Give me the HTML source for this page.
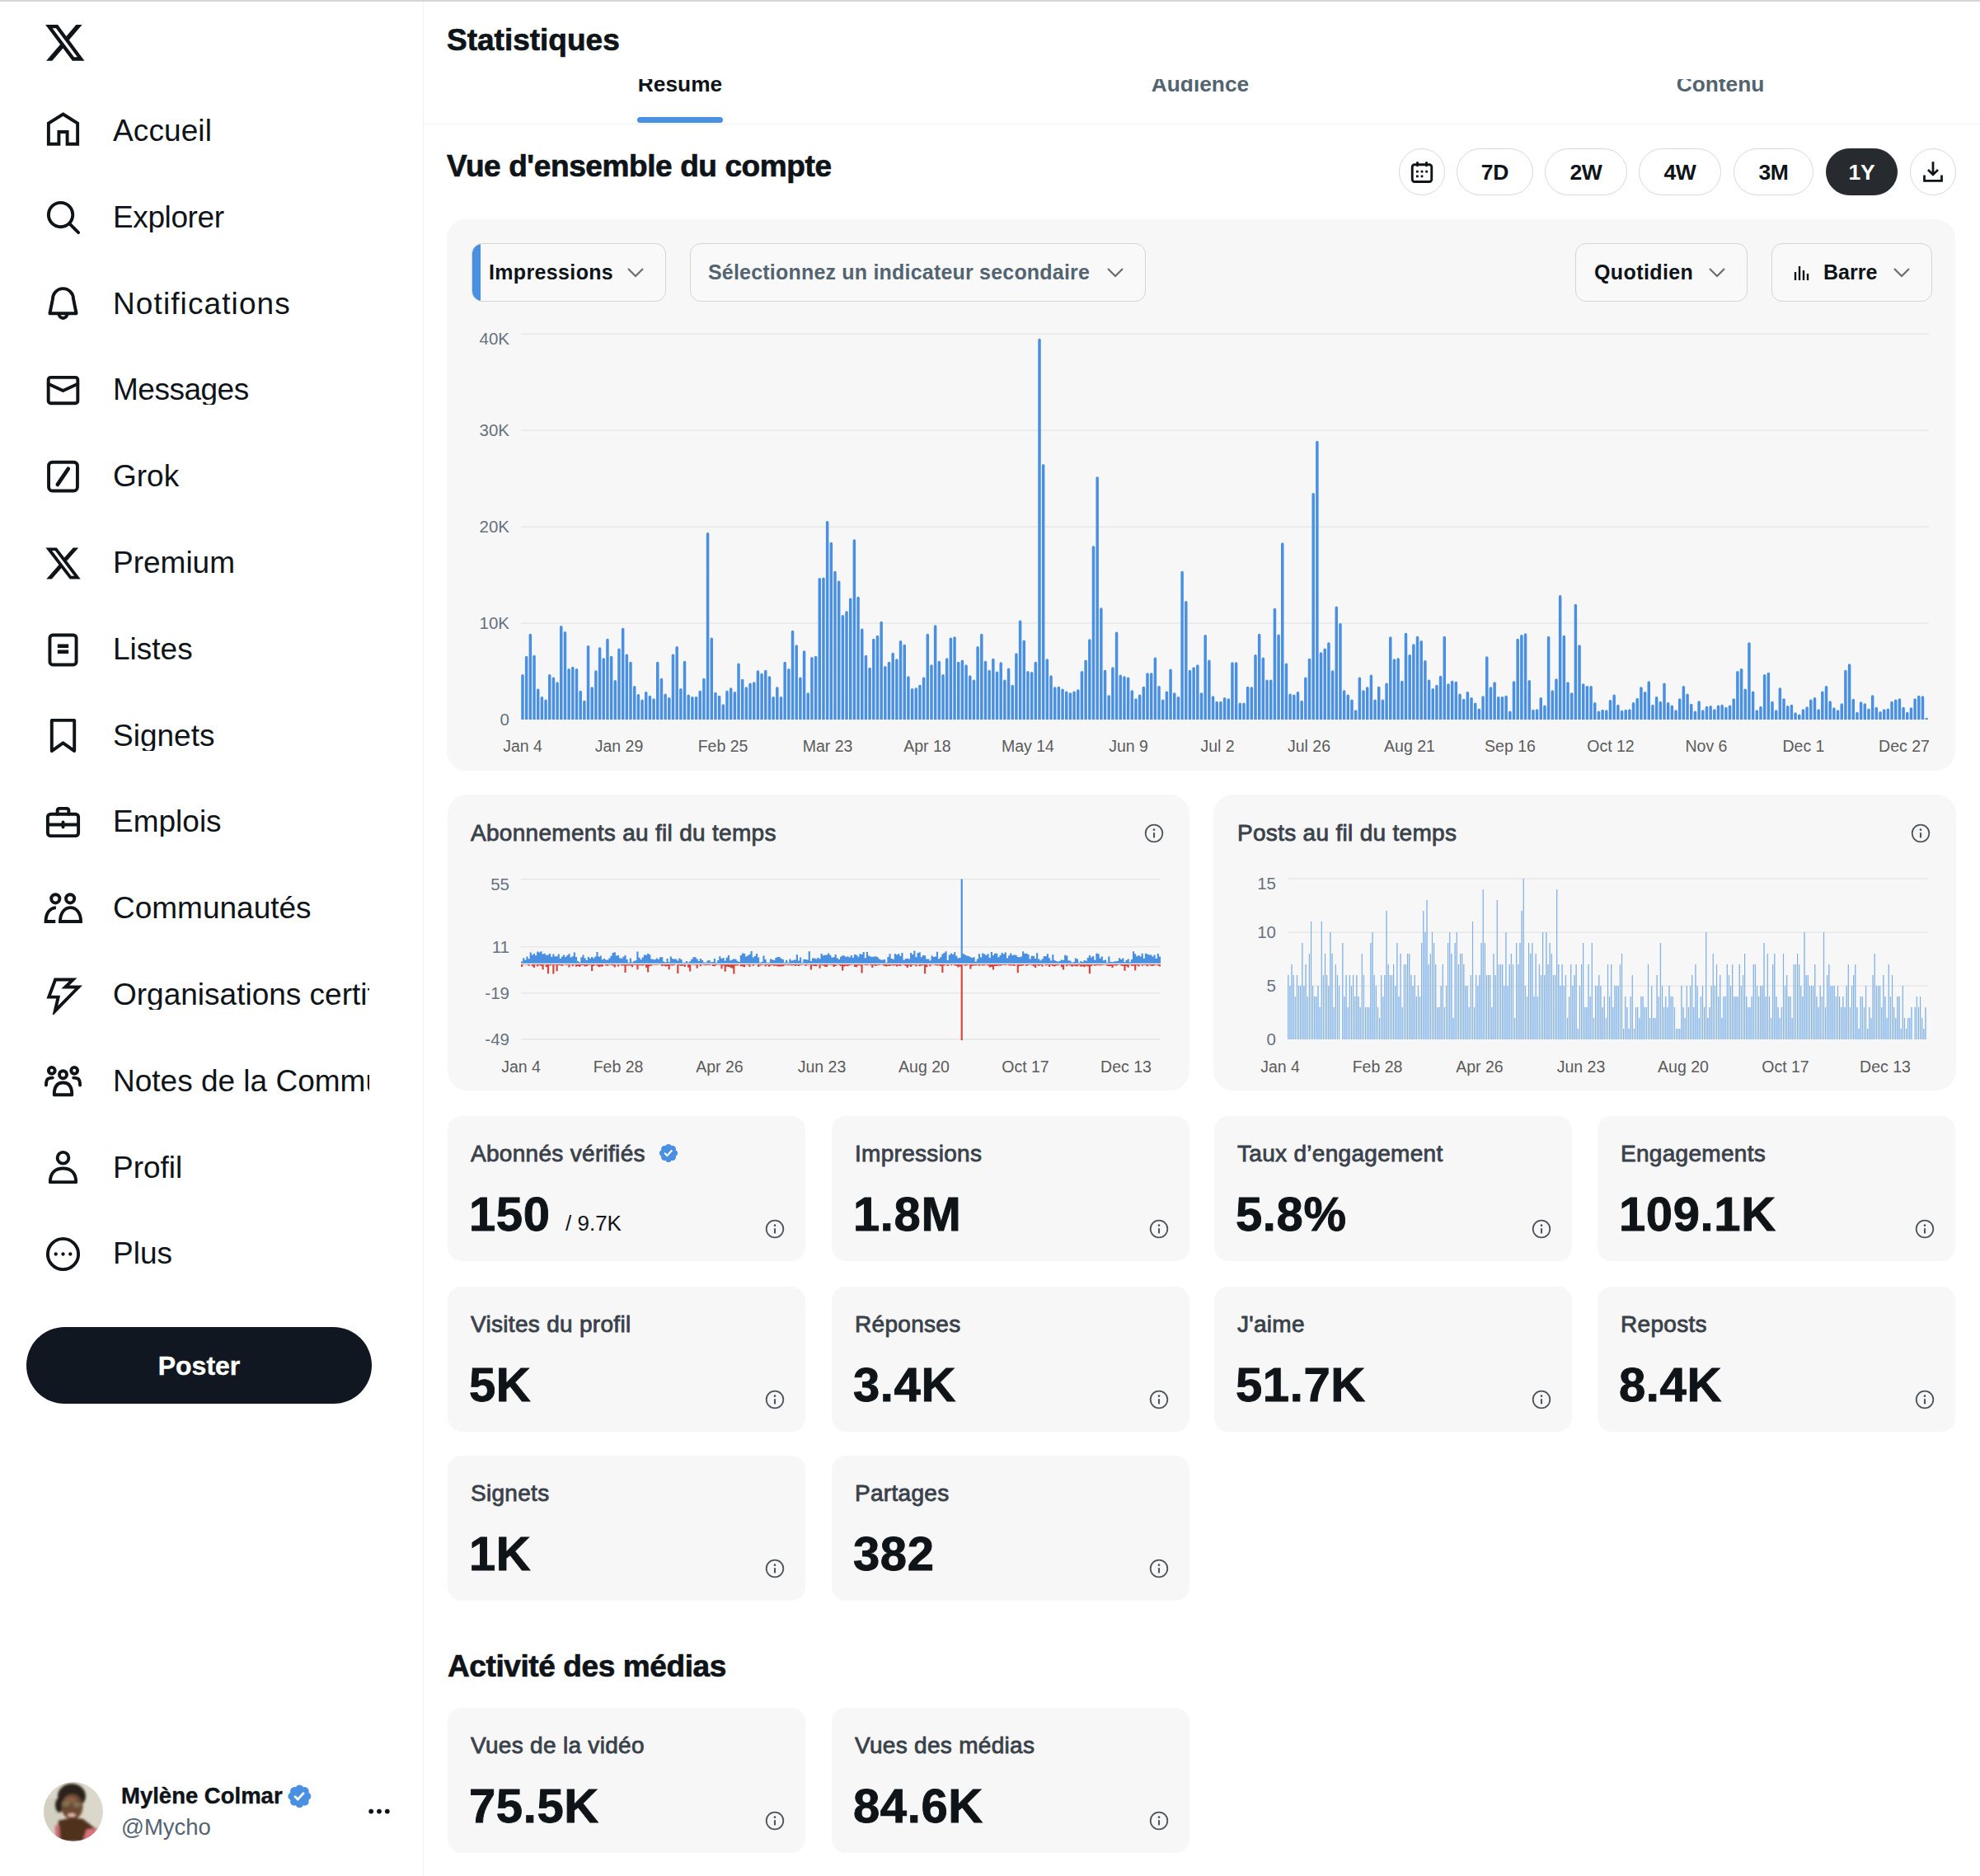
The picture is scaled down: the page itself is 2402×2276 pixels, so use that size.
<!DOCTYPE html><html><head><meta charset="utf-8"><style>
*{box-sizing:border-box;margin:0;padding:0}
html,body{width:2402px;height:2276px;overflow:hidden;background:#fff;font-family:"Liberation Sans",sans-serif;color:#0f1419}
.abs{position:absolute}
.t{position:absolute;white-space:nowrap;line-height:1}
.nav{position:absolute;left:137px;font-size:37px;white-space:nowrap;line-height:1;color:#0f1419}
.ic{position:absolute;left:49px;width:56px;height:56px}
.card{position:absolute;background:#f7f7f7;border-radius:24px}
.mt{position:absolute;left:28px;font-size:28px;font-weight:400;color:#39414a;-webkit-text-stroke:0.8px #39414a;white-space:nowrap;line-height:1;letter-spacing:0.3px}
.mv{position:absolute;left:26px;font-size:58px;letter-spacing:0.6px;-webkit-text-stroke:0.9px #0f1419;font-weight:700;color:#0f1419;white-space:nowrap;line-height:1}
.info{position:absolute;right:21px;width:24px;height:24px}
.pill{position:absolute;top:180px;height:57px;border:1.5px solid #d9d9d9;border-radius:29px;background:#fff;font-size:26.5px;font-weight:700;display:flex;align-items:center;justify-content:center;letter-spacing:-0.3px;padding-top:1px}
.dd{position:absolute;top:295px;height:71px;border:1.5px solid #d5d5d5;border-radius:13px;background:#f9f9fa;font-size:27px;font-weight:700;line-height:1;white-space:nowrap}
.ax{font-size:20.5px;fill:#66727e;font-family:"Liberation Sans",sans-serif}
</style></head><body>
<div class="abs" style="left:0;top:0;width:2402px;height:2px;background:#d6d6d6"></div>
<div class="abs" style="left:513px;top:2px;width:1px;height:2274px;background:#eff1f2"></div>
<svg class="abs" style="left:55.2px;top:30px;width:47.4px;height:43.8px" viewBox="1.2 2.2 21.6 19.6" preserveAspectRatio="none"><path fill="#0f1419" d="M18.244 2.25h3.308l-7.227 8.26 8.502 11.24H16.17l-5.214-6.817L4.99 21.75H1.68l7.73-8.835L1.254 2.25H8.08l4.713 6.231zm-1.161 17.52h1.833L7.084 4.126H5.117z"/></svg>
<svg class="abs" style="left:53px;top:134.3px;width:47px;height:47px" viewBox="0 0 24 24"><path d="M12 2.3 L21 7.9 V20.8 H14.6 V13.3 H9.4 V20.8 H3 V7.9 Z" fill="none" stroke="#0f1419" stroke-width="2" stroke-linejoin="miter" stroke-miterlimit="8" stroke-linecap="butt"/></svg>
<div class="nav" style="top:139.9px;letter-spacing:0.1px;width:311px;overflow:hidden">Accueil</div>
<svg class="abs" style="left:53px;top:240.1px;width:47px;height:47px" viewBox="0 0 24 24"><circle cx="10.5" cy="10.5" r="7.5" fill="none" stroke="#0f1419" stroke-width="2" stroke-linejoin="round" stroke-linecap="round"/><path d="M16 16 L21.5 21.5" fill="none" stroke="#0f1419" stroke-width="2" stroke-linejoin="round" stroke-linecap="round"/></svg>
<div class="nav" style="top:244.7px;letter-spacing:-0.4px;width:311px;overflow:hidden">Explorer</div>
<svg class="abs" style="left:53px;top:345.4px;width:47px;height:47px" viewBox="0 0 24 24"><path d="M5.6 9 A6.4 6.4 0 0 1 18.4 9 L20.2 18 H3.8 Z" fill="none" stroke="#0f1419" stroke-width="2" stroke-linejoin="round" stroke-linecap="round"/><path d="M9.4 18.3 A2.6 2.6 0 0 0 14.6 18.3" fill="none" stroke="#0f1419" stroke-width="2" stroke-linejoin="round" stroke-linecap="round"/></svg>
<div class="nav" style="top:349.5px;letter-spacing:1.1px;width:311px;overflow:hidden">Notifications</div>
<svg class="abs" style="left:53px;top:450.2px;width:47px;height:47px" viewBox="0 0 24 24"><rect x="2.9" y="4" width="18.2" height="16" rx="1.5" fill="none" stroke="#0f1419" stroke-width="2" stroke-linejoin="round" stroke-linecap="round"/><path d="M2.9 8 L12 12.3 L21.1 8" fill="none" stroke="#0f1419" stroke-width="2" stroke-linejoin="round" stroke-linecap="round"/></svg>
<div class="nav" style="top:454.3px;letter-spacing:-0.5px;width:311px;overflow:hidden">Messages</div>
<svg class="abs" style="left:53px;top:555.0px;width:47px;height:47px" viewBox="0 0 24 24"><rect x="3.1" y="2.9" width="17.8" height="17.8" rx="2.3" fill="none" stroke="#0f1419" stroke-width="2" stroke-linejoin="round" stroke-linecap="round"/><path d="M15.2 7 L8.6 16.8" fill="none" stroke="#0f1419" stroke-width="2" stroke-linejoin="round" stroke-linecap="round" style="stroke-width:2.4"/></svg>
<div class="nav" style="top:559.1px;letter-spacing:0px;width:311px;overflow:hidden">Grok</div>
<svg class="abs" style="left:53px;top:659.8px;width:47px;height:47px" viewBox="0 0 24 24"><path fill="#0f1419" d="M18.244 2.25h3.308l-7.227 8.26 8.502 11.24H16.17l-5.214-6.817L4.99 21.75H1.68l7.73-8.835L1.254 2.25H8.08l4.713 6.231zm-1.161 17.52h1.833L7.084 4.126H5.117z"/></svg>
<div class="nav" style="top:663.9px;letter-spacing:0px;width:311px;overflow:hidden">Premium</div>
<svg class="abs" style="left:53px;top:764.6px;width:47px;height:47px" viewBox="0 0 24 24"><rect x="3.8" y="2.8" width="16.4" height="18.4" rx="1.8" fill="none" stroke="#0f1419" stroke-width="2" stroke-linejoin="round" stroke-linecap="round"/><path d="M8.6 9.6 H15.4 M8.6 13.2 H15.4" fill="none" stroke="#0f1419" stroke-width="2" stroke-linejoin="round" stroke-linecap="round" style="stroke-width:2.3;stroke-linecap:butt"/></svg>
<div class="nav" style="top:768.7px;letter-spacing:0px;width:311px;overflow:hidden">Listes</div>
<svg class="abs" style="left:53px;top:869.4px;width:47px;height:47px" viewBox="0 0 24 24"><path d="M5 2.5 H19 V21.5 L12 16.5 L5 21.5 Z" fill="none" stroke="#0f1419" stroke-width="2" stroke-linejoin="round" stroke-linecap="round"/></svg>
<div class="nav" style="top:873.5px;letter-spacing:0px;width:311px;overflow:hidden">Signets</div>
<svg class="abs" style="left:53px;top:974.2px;width:47px;height:47px" viewBox="0 0 24 24"><rect x="2.5" y="7" width="19" height="13.5" rx="1.8" fill="none" stroke="#0f1419" stroke-width="2" stroke-linejoin="round" stroke-linecap="round"/><path d="M8.5 7 V4.8 Q8.5 3.5 9.8 3.5 H14.2 Q15.5 3.5 15.5 4.8 V7 M2.5 13.5 H21.5 M12 12 V15" fill="none" stroke="#0f1419" stroke-width="2" stroke-linejoin="round" stroke-linecap="round"/></svg>
<div class="nav" style="top:978.3px;letter-spacing:0px;width:311px;overflow:hidden">Emplois</div>
<svg class="abs" style="left:53px;top:1079.0px;width:47px;height:47px" viewBox="0 0 24 24"><circle cx="7.3" cy="5.8" r="2.6" fill="none" stroke="#0f1419" stroke-width="2" stroke-linejoin="round" stroke-linecap="round"/><circle cx="16.4" cy="5.8" r="2.6" fill="none" stroke="#0f1419" stroke-width="2" stroke-linejoin="round" stroke-linecap="round"/><path d="M7.6 11.3 C3.6 11.6 1.3 15 1.3 19.9 H7.3" fill="none" stroke="#0f1419" stroke-width="2" stroke-linejoin="miter" stroke-miterlimit="8" stroke-linecap="butt"/><path d="M10.2 19.9 C10.2 14.6 13 11.3 16.6 11.3 C20.2 11.3 23 14.6 23 19.9 Z" fill="none" stroke="#0f1419" stroke-width="2" stroke-linejoin="miter" stroke-miterlimit="8" stroke-linecap="butt"/></svg>
<div class="nav" style="top:1083.1px;letter-spacing:0px;width:311px;overflow:hidden">Communautés</div>
<svg class="abs" style="left:53px;top:1183.8px;width:47px;height:47px" viewBox="0 0 24 24"><path d="M7.2 2.3 H18.2 L13.4 6.9 H21.6 L7 21.8 L9 13.1 H3.2 Z" fill="none" stroke="#0f1419" stroke-width="2" stroke-linejoin="miter" stroke-miterlimit="8" stroke-linecap="butt"/></svg>
<div class="nav" style="top:1187.9px;letter-spacing:0px;width:311px;overflow:hidden">Organisations certifiées</div>
<svg class="abs" style="left:53px;top:1288.6px;width:47px;height:47px" viewBox="0 0 24 24"><circle cx="5" cy="5" r="2" fill="none" stroke="#0f1419" stroke-width="2" stroke-linejoin="round" stroke-linecap="round"/><circle cx="12" cy="7.5" r="2.3" fill="none" stroke="#0f1419" stroke-width="2" stroke-linejoin="round" stroke-linecap="round"/><circle cx="19" cy="5" r="2" fill="none" stroke="#0f1419" stroke-width="2" stroke-linejoin="round" stroke-linecap="round"/><path d="M1.5 14 C1.5 10 3 9.5 5.5 9.5 M22.5 14 C22.5 10 21 9.5 18.5 9.5 M6.5 20 C6.5 15 8.5 12.5 12 12.5 C15.5 12.5 17.5 15 17.5 20 Z" fill="none" stroke="#0f1419" stroke-width="2" stroke-linejoin="round" stroke-linecap="round"/></svg>
<div class="nav" style="top:1292.7px;letter-spacing:0px;width:311px;overflow:hidden">Notes de la Communauté</div>
<svg class="abs" style="left:53px;top:1393.4px;width:47px;height:47px" viewBox="0 0 24 24"><circle cx="12" cy="6" r="3.5" fill="none" stroke="#0f1419" stroke-width="2" stroke-linejoin="round" stroke-linecap="round"/><path d="M4 21 C4 15 7.5 12.5 12 12.5 C16.5 12.5 20 15 20 21 Z" fill="none" stroke="#0f1419" stroke-width="2" stroke-linejoin="round" stroke-linecap="round"/></svg>
<div class="nav" style="top:1397.5px;letter-spacing:0px;width:311px;overflow:hidden">Profil</div>
<svg class="abs" style="left:53px;top:1498.2px;width:47px;height:47px" viewBox="0 0 24 24"><circle cx="12" cy="12" r="9.5" fill="none" stroke="#0f1419" stroke-width="2" stroke-linejoin="round" stroke-linecap="round"/><circle cx="7.5" cy="12" r="1.1" fill="#0f1419"/><circle cx="12" cy="12" r="1.1" fill="#0f1419"/><circle cx="16.5" cy="12" r="1.1" fill="#0f1419"/></svg>
<div class="nav" style="top:1502.3px;letter-spacing:0px;width:311px;overflow:hidden">Plus</div>
<div class="abs" style="left:32px;top:1610px;width:419px;height:93px;border-radius:47px;background:#111720;color:#fff;font-size:32px;font-weight:700;-webkit-text-stroke:0.4px #fff;display:flex;align-items:center;justify-content:center;padding-top:1px">Poster</div>
<svg class="abs" style="left:53px;top:2162px;width:72px;height:72px" viewBox="0 0 72 72"><defs><clipPath id="av"><circle cx="36" cy="36" r="36"/></clipPath><filter id="bl"><feGaussianBlur stdDeviation="1.4"/></filter></defs><g clip-path="url(#av)"><rect width="72" height="72" fill="#dbd8cb"/><rect x="0" y="20" width="22" height="52" fill="#d3d0c2"/><g filter="url(#bl)"><ellipse cx="34" cy="17" rx="17" ry="15" fill="#2a221c"/><ellipse cx="19" cy="28" rx="5" ry="9" fill="#2a221c"/><ellipse cx="34.5" cy="30" rx="13" ry="15.5" fill="#6d4832"/><ellipse cx="33" cy="22" rx="7" ry="4" fill="#8a5f44"/><ellipse cx="27" cy="26.5" rx="4.6" ry="3.2" fill="#7a7252"/><ellipse cx="40.5" cy="27.5" rx="4.6" ry="3.2" fill="#7a7252"/><ellipse cx="33.8" cy="40" rx="4.8" ry="2" fill="#e8b8b0"/><path d="M15 72 L18 47 C 25 44 40 43 48 45 L64 57.6 L64 72Z" fill="#50301f"/><path d="M47.3 72 L52 57.6 L66 56 L62 71Z" fill="#d8727c"/><path d="M13.5 52.8 L19 52.8 L19.9 69.6 L14.5 67.2Z" fill="#cc6e74"/></g></g></svg>
<div class="t" style="left:147px;top:2164.7px;font-size:27.5px;font-weight:700;-webkit-text-stroke:0.4px #0f1419">Mylène Colmar</div>
<div class="t" style="left:147px;top:2202.7px;font-size:27.5px;color:#536471">@Mycho</div>
<svg class="abs" style="left:440px;top:2188px;width:40px;height:20px" viewBox="440 2188 40 20"><g fill="#0f1419"><circle cx="450.2" cy="2197.6" r="2.9"/><circle cx="460" cy="2197.6" r="2.9"/><circle cx="469.8" cy="2197.6" r="2.9"/></g></svg>
<div class="t" style="left:675px;width:300px;text-align:center;top:88.7px;font-size:26.3px;font-weight:700;color:#0f1419;letter-spacing:0px">Résumé</div>
<div class="t" style="left:1306px;width:300px;text-align:center;top:88.7px;font-size:26.3px;font-weight:700;color:#536471;letter-spacing:0px">Audience</div>
<div class="t" style="left:1937px;width:300px;text-align:center;top:88.7px;font-size:26.3px;font-weight:700;color:#536471;letter-spacing:0px">Contenu</div>
<div class="abs" style="left:773px;top:142px;width:104px;height:7px;border-radius:4px;background:#4a90e2"></div>
<div class="abs" style="left:514px;top:150px;width:1888px;height:1px;background:#eff1f2"></div>
<div class="abs" style="left:514px;top:2px;width:1888px;height:94px;background:#fff"></div>
<div class="t" style="left:542px;top:30.1px;font-size:37px;font-weight:700;-webkit-text-stroke:0.7px #0f1419">Statistiques</div>
<div class="t" style="left:542px;top:183.2px;font-size:37px;font-weight:700;letter-spacing:-0.4px;-webkit-text-stroke:0.7px #0f1419">Vue d'ensemble du compte</div>
<div class="pill" style="left:1697px;width:56px"><svg width="30" height="30" viewBox="0 0 24 24"><rect x="2.6" y="4.6" width="18.8" height="16.6" rx="2.2" fill="none" stroke="#0f1419" stroke-width="2" stroke-linejoin="round" stroke-linecap="round" style="stroke-width:2.3"/><path d="M7.6 2.8 V5.5 M16.4 2.8 V5.5" fill="none" stroke="#0f1419" stroke-width="2" stroke-linejoin="round" stroke-linecap="round" style="stroke-width:2.3"/><g fill="#0f1419"><rect x="6.4" y="10.2" width="2.2" height="2.2"/><rect x="10.9" y="10.2" width="2.2" height="2.2"/><rect x="15.4" y="10.2" width="2.2" height="2.2"/><rect x="6.4" y="14.8" width="2.2" height="2.2"/><rect x="10.9" y="14.8" width="2.2" height="2.2"/></g></svg></div>
<div class="pill" style="left:1767px;width:93px">7D</div>
<div class="pill" style="left:1874px;width:100px">2W</div>
<div class="pill" style="left:1988px;width:100px">4W</div>
<div class="pill" style="left:2103px;width:97px">3M</div>
<div class="pill" style="left:2215px;width:87px;background:#272b30;border-color:#272b30;color:#fff">1Y</div>
<div class="pill" style="left:2317px;width:56px"><svg width="30" height="30" viewBox="0 0 24 24"><path d="M12 1.8 V14.3 M7.2 9.6 L12 14.3 L16.8 9.6 M3.6 14.8 V20.2 H20.4 V14.8" fill="none" stroke="#0f1419" stroke-width="2" stroke-linejoin="miter" stroke-miterlimit="8" stroke-linecap="butt" style="stroke-width:2.2"/></svg></div>
<div class="card" style="left:542px;top:266px;width:1830px;height:669px"></div>
<div class="dd" style="left:572px;width:236px;overflow:hidden"><div style="position:absolute;left:-2px;top:-2px;bottom:-2px;width:12px;background:#4a90e2"></div></div>
<div class="t" style="left:593px;top:318.0px;font-size:25px;font-weight:700;letter-spacing:0.35px">Impressions</div>
<svg class="abs" style="left:760px;top:324px;width:22px;height:14px" viewBox="0 0 22 14"><path d="M2 2 L11 11 L20 2" fill="none" stroke="#6b6b6b" stroke-width="2.2"/></svg>
<div class="dd" style="left:837px;width:553px"></div>
<div class="t" style="left:859px;top:318.0px;font-size:25px;font-weight:700;letter-spacing:0.2px;color:#536471">Sélectionnez un indicateur secondaire</div>
<svg class="abs" style="left:1342px;top:324px;width:22px;height:14px" viewBox="0 0 22 14"><path d="M2 2 L11 11 L20 2" fill="none" stroke="#6b6b6b" stroke-width="2.2"/></svg>
<div class="dd" style="left:1911px;width:209px"></div>
<div class="t" style="left:1934px;top:318.0px;font-size:25px;font-weight:700;letter-spacing:0.4px">Quotidien</div>
<svg class="abs" style="left:2072px;top:324px;width:22px;height:14px" viewBox="0 0 22 14"><path d="M2 2 L11 11 L20 2" fill="none" stroke="#6b6b6b" stroke-width="2.2"/></svg>
<div class="dd" style="left:2149px;width:195px"></div>
<svg class="abs" style="left:2175px;top:320px;width:20px;height:20px" viewBox="0 0 20 20"><path d="M3 20 V10 M8 20 V3 M13 20 V8 M18 20 V12" stroke="#0f1419" stroke-width="2.4"/></svg>
<div class="t" style="left:2212px;top:318.0px;font-size:25px;font-weight:700;letter-spacing:0px">Barre</div>
<svg class="abs" style="left:2296px;top:324px;width:22px;height:14px" viewBox="0 0 22 14"><path d="M2 2 L11 11 L20 2" fill="none" stroke="#6b6b6b" stroke-width="2.2"/></svg>
<div class="card" style="left:543px;top:964px;width:900px;height:359px"></div>
<div class="card" style="left:1472px;top:964px;width:901px;height:359px"></div>
<div class="t" style="left:571px;top:996.8px;font-size:28px;font-weight:400;color:#39414a;-webkit-text-stroke:0.8px #39414a;letter-spacing:0.3px">Abonnements au fil du temps</div>
<div class="t" style="left:1501px;top:996.8px;font-size:28px;font-weight:400;color:#39414a;-webkit-text-stroke:0.8px #39414a;letter-spacing:0.3px">Posts au fil du temps</div>
<svg class="abs" style="left:1387px;top:998px;width:26px;height:26px" viewBox="-13 -13 26 26"><circle r="10.3" fill="none" stroke="#4d555d" stroke-width="1.8"/><circle cy="-4.3" r="1.35" fill="#4d555d"/><path d="M0 -0.8 V5.4" stroke="#4d555d" stroke-width="2.1"/></svg>
<svg class="abs" style="left:2317px;top:998px;width:26px;height:26px" viewBox="-13 -13 26 26"><circle r="10.3" fill="none" stroke="#4d555d" stroke-width="1.8"/><circle cy="-4.3" r="1.35" fill="#4d555d"/><path d="M0 -0.8 V5.4" stroke="#4d555d" stroke-width="2.1"/></svg>
<svg class="abs" style="left:0;top:0;width:2402px;height:2276px;overflow:visible" viewBox="0 0 2402 2276">
<text class="ax" x="618" y="880" text-anchor="end">0</text>
<rect x="632" y="755.5" width="1708" height="1.2" fill="#e3e3e3"/>
<text class="ax" x="618" y="763" text-anchor="end">10K</text>
<rect x="632" y="638.5" width="1708" height="1.2" fill="#e3e3e3"/>
<text class="ax" x="618" y="646" text-anchor="end">20K</text>
<rect x="632" y="521.5" width="1708" height="1.2" fill="#e3e3e3"/>
<text class="ax" x="618" y="529" text-anchor="end">30K</text>
<rect x="632" y="404.5" width="1708" height="1.2" fill="#e3e3e3"/>
<text class="ax" x="618" y="418" text-anchor="end">40K</text>
<path fill="#4a90e2" d="M632.25 873V819.8a1.75 1.75 0 0 1 3.5 0V873ZM636.93 873V797.5a1.75 1.75 0 0 1 3.5 0V873ZM641.61 873V770.6a1.75 1.75 0 0 1 3.5 0V873ZM646.29 873V796.4a1.75 1.75 0 0 1 3.5 0V873ZM650.97 873V837.3a1.75 1.75 0 0 1 3.5 0V873ZM655.64 873V846.7a1.75 1.75 0 0 1 3.5 0V873ZM660.32 873V850.2a1.75 1.75 0 0 1 3.5 0V873ZM665.00 873V819.8a1.75 1.75 0 0 1 3.5 0V873ZM669.68 873V823.3a1.75 1.75 0 0 1 3.5 0V873ZM674.36 873V829.1a1.75 1.75 0 0 1 3.5 0V873ZM679.04 873V760.7a1.75 1.75 0 0 1 3.5 0V873ZM683.72 873V767.7a1.75 1.75 0 0 1 3.5 0V873ZM688.40 873V812.7a1.75 1.75 0 0 1 3.5 0V873ZM693.08 873V810.4a1.75 1.75 0 0 1 3.5 0V873ZM697.76 873V812.7a1.75 1.75 0 0 1 3.5 0V873ZM702.43 873V839.6a1.75 1.75 0 0 1 3.5 0V873ZM707.11 873V851.4a1.75 1.75 0 0 1 3.5 0V873ZM711.79 873V784.7a1.75 1.75 0 0 1 3.5 0V873ZM716.47 873V835.0a1.75 1.75 0 0 1 3.5 0V873ZM721.15 873V815.1a1.75 1.75 0 0 1 3.5 0V873ZM725.83 873V787.0a1.75 1.75 0 0 1 3.5 0V873ZM730.51 873V799.9a1.75 1.75 0 0 1 3.5 0V873ZM735.19 873V776.5a1.75 1.75 0 0 1 3.5 0V873ZM739.87 873V797.5a1.75 1.75 0 0 1 3.5 0V873ZM744.55 873V826.8a1.75 1.75 0 0 1 3.5 0V873ZM749.23 873V788.2a1.75 1.75 0 0 1 3.5 0V873ZM753.90 873V763.6a1.75 1.75 0 0 1 3.5 0V873ZM758.58 873V795.2a1.75 1.75 0 0 1 3.5 0V873ZM763.26 873V804.5a1.75 1.75 0 0 1 3.5 0V873ZM767.94 873V833.8a1.75 1.75 0 0 1 3.5 0V873ZM772.62 873V843.7a1.75 1.75 0 0 1 3.5 0V873ZM777.30 873V850.2a1.75 1.75 0 0 1 3.5 0V873ZM781.98 873V840.8a1.75 1.75 0 0 1 3.5 0V873ZM786.66 873V845.5a1.75 1.75 0 0 1 3.5 0V873ZM791.34 873V849.0a1.75 1.75 0 0 1 3.5 0V873ZM796.01 873V804.5a1.75 1.75 0 0 1 3.5 0V873ZM800.69 873V824.4a1.75 1.75 0 0 1 3.5 0V873ZM805.37 873V843.2a1.75 1.75 0 0 1 3.5 0V873ZM810.05 873V847.8a1.75 1.75 0 0 1 3.5 0V873ZM814.73 873V795.2a1.75 1.75 0 0 1 3.5 0V873ZM819.41 873V785.8a1.75 1.75 0 0 1 3.5 0V873ZM824.09 873V836.7a1.75 1.75 0 0 1 3.5 0V873ZM828.77 873V803.4a1.75 1.75 0 0 1 3.5 0V873ZM833.45 873V844.3a1.75 1.75 0 0 1 3.5 0V873ZM838.13 873V846.7a1.75 1.75 0 0 1 3.5 0V873ZM842.81 873V846.7a1.75 1.75 0 0 1 3.5 0V873ZM847.48 873V839.6a1.75 1.75 0 0 1 3.5 0V873ZM852.16 873V824.4a1.75 1.75 0 0 1 3.5 0V873ZM856.84 873V647.8a1.75 1.75 0 0 1 3.5 0V873ZM861.52 873V775.3a1.75 1.75 0 0 1 3.5 0V873ZM866.20 873V841.4a1.75 1.75 0 0 1 3.5 0V873ZM870.88 873V845.5a1.75 1.75 0 0 1 3.5 0V873ZM875.56 873V856.0a1.75 1.75 0 0 1 3.5 0V873ZM880.24 873V839.6a1.75 1.75 0 0 1 3.5 0V873ZM884.92 873V836.1a1.75 1.75 0 0 1 3.5 0V873ZM889.60 873V840.8a1.75 1.75 0 0 1 3.5 0V873ZM894.27 873V806.3a1.75 1.75 0 0 1 3.5 0V873ZM898.95 873V825.6a1.75 1.75 0 0 1 3.5 0V873ZM903.63 873V835.0a1.75 1.75 0 0 1 3.5 0V873ZM908.31 873V830.3a1.75 1.75 0 0 1 3.5 0V873ZM912.99 873V829.1a1.75 1.75 0 0 1 3.5 0V873ZM917.67 873V815.1a1.75 1.75 0 0 1 3.5 0V873ZM922.35 873V818.6a1.75 1.75 0 0 1 3.5 0V873ZM927.03 873V814.5a1.75 1.75 0 0 1 3.5 0V873ZM931.71 873V822.1a1.75 1.75 0 0 1 3.5 0V873ZM936.38 873V846.7a1.75 1.75 0 0 1 3.5 0V873ZM941.06 873V835.0a1.75 1.75 0 0 1 3.5 0V873ZM945.74 873V846.7a1.75 1.75 0 0 1 3.5 0V873ZM950.42 873V804.5a1.75 1.75 0 0 1 3.5 0V873ZM955.10 873V812.7a1.75 1.75 0 0 1 3.5 0V873ZM959.78 873V766.5a1.75 1.75 0 0 1 3.5 0V873ZM964.46 873V784.1a1.75 1.75 0 0 1 3.5 0V873ZM969.14 873V823.3a1.75 1.75 0 0 1 3.5 0V873ZM973.82 873V791.1a1.75 1.75 0 0 1 3.5 0V873ZM978.50 873V842.0a1.75 1.75 0 0 1 3.5 0V873ZM983.17 873V798.7a1.75 1.75 0 0 1 3.5 0V873ZM987.85 873V797.5a1.75 1.75 0 0 1 3.5 0V873ZM992.53 873V702.8a1.75 1.75 0 0 1 3.5 0V873ZM997.21 873V702.2a1.75 1.75 0 0 1 3.5 0V873ZM1001.89 873V633.7a1.75 1.75 0 0 1 3.5 0V873ZM1006.57 873V659.5a1.75 1.75 0 0 1 3.5 0V873ZM1011.25 873V694.6a1.75 1.75 0 0 1 3.5 0V873ZM1015.93 873V706.3a1.75 1.75 0 0 1 3.5 0V873ZM1020.61 873V747.8a1.75 1.75 0 0 1 3.5 0V873ZM1025.29 873V743.1a1.75 1.75 0 0 1 3.5 0V873ZM1029.97 873V727.3a1.75 1.75 0 0 1 3.5 0V873ZM1034.64 873V656.0a1.75 1.75 0 0 1 3.5 0V873ZM1039.32 873V725.6a1.75 1.75 0 0 1 3.5 0V873ZM1044.00 873V764.2a1.75 1.75 0 0 1 3.5 0V873ZM1048.68 873V796.4a1.75 1.75 0 0 1 3.5 0V873ZM1053.36 873V811.6a1.75 1.75 0 0 1 3.5 0V873ZM1058.04 873V776.5a1.75 1.75 0 0 1 3.5 0V873ZM1062.72 873V772.4a1.75 1.75 0 0 1 3.5 0V873ZM1067.40 873V755.4a1.75 1.75 0 0 1 3.5 0V873ZM1072.08 873V809.8a1.75 1.75 0 0 1 3.5 0V873ZM1076.76 873V804.5a1.75 1.75 0 0 1 3.5 0V873ZM1081.43 873V793.4a1.75 1.75 0 0 1 3.5 0V873ZM1086.11 873V801.0a1.75 1.75 0 0 1 3.5 0V873ZM1090.79 873V778.8a1.75 1.75 0 0 1 3.5 0V873ZM1095.47 873V783.5a1.75 1.75 0 0 1 3.5 0V873ZM1100.15 873V822.1a1.75 1.75 0 0 1 3.5 0V873ZM1104.83 873V836.7a1.75 1.75 0 0 1 3.5 0V873ZM1109.51 873V836.1a1.75 1.75 0 0 1 3.5 0V873ZM1114.19 873V832.6a1.75 1.75 0 0 1 3.5 0V873ZM1118.87 873V823.3a1.75 1.75 0 0 1 3.5 0V873ZM1123.55 873V770.6a1.75 1.75 0 0 1 3.5 0V873ZM1128.22 873V808.1a1.75 1.75 0 0 1 3.5 0V873ZM1132.90 873V760.1a1.75 1.75 0 0 1 3.5 0V873ZM1137.58 873V803.4a1.75 1.75 0 0 1 3.5 0V873ZM1142.26 873V819.8a1.75 1.75 0 0 1 3.5 0V873ZM1146.94 873V799.9a1.75 1.75 0 0 1 3.5 0V873ZM1151.62 873V775.3a1.75 1.75 0 0 1 3.5 0V873ZM1156.30 873V774.1a1.75 1.75 0 0 1 3.5 0V873ZM1160.98 873V804.5a1.75 1.75 0 0 1 3.5 0V873ZM1165.66 873V802.2a1.75 1.75 0 0 1 3.5 0V873ZM1170.34 873V808.1a1.75 1.75 0 0 1 3.5 0V873ZM1175.01 873V820.9a1.75 1.75 0 0 1 3.5 0V873ZM1179.69 873V826.2a1.75 1.75 0 0 1 3.5 0V873ZM1184.37 873V785.8a1.75 1.75 0 0 1 3.5 0V873ZM1189.05 873V770.6a1.75 1.75 0 0 1 3.5 0V873ZM1193.73 873V803.4a1.75 1.75 0 0 1 3.5 0V873ZM1198.41 873V814.5a1.75 1.75 0 0 1 3.5 0V873ZM1203.09 873V800.5a1.75 1.75 0 0 1 3.5 0V873ZM1207.77 873V816.2a1.75 1.75 0 0 1 3.5 0V873ZM1212.45 873V805.1a1.75 1.75 0 0 1 3.5 0V873ZM1217.12 873V826.2a1.75 1.75 0 0 1 3.5 0V873ZM1221.80 873V812.2a1.75 1.75 0 0 1 3.5 0V873ZM1226.48 873V832.6a1.75 1.75 0 0 1 3.5 0V873ZM1231.16 873V794.0a1.75 1.75 0 0 1 3.5 0V873ZM1235.84 873V754.2a1.75 1.75 0 0 1 3.5 0V873ZM1240.52 873V778.2a1.75 1.75 0 0 1 3.5 0V873ZM1245.20 873V815.7a1.75 1.75 0 0 1 3.5 0V873ZM1249.88 873V816.8a1.75 1.75 0 0 1 3.5 0V873ZM1254.56 873V804.5a1.75 1.75 0 0 1 3.5 0V873ZM1259.24 873V412.6a1.75 1.75 0 0 1 3.5 0V873ZM1263.91 873V564.7a1.75 1.75 0 0 1 3.5 0V873ZM1268.59 873V801.0a1.75 1.75 0 0 1 3.5 0V873ZM1273.27 873V820.9a1.75 1.75 0 0 1 3.5 0V873ZM1277.95 873V835.0a1.75 1.75 0 0 1 3.5 0V873ZM1282.63 873V834.4a1.75 1.75 0 0 1 3.5 0V873ZM1287.31 873V837.3a1.75 1.75 0 0 1 3.5 0V873ZM1291.99 873V840.2a1.75 1.75 0 0 1 3.5 0V873ZM1296.67 873V842.0a1.75 1.75 0 0 1 3.5 0V873ZM1301.35 873V840.2a1.75 1.75 0 0 1 3.5 0V873ZM1306.03 873V837.9a1.75 1.75 0 0 1 3.5 0V873ZM1310.70 873V815.7a1.75 1.75 0 0 1 3.5 0V873ZM1315.38 873V802.2a1.75 1.75 0 0 1 3.5 0V873ZM1320.06 873V777.1a1.75 1.75 0 0 1 3.5 0V873ZM1324.74 873V664.1a1.75 1.75 0 0 1 3.5 0V873ZM1329.42 873V579.9a1.75 1.75 0 0 1 3.5 0V873ZM1334.10 873V739.0a1.75 1.75 0 0 1 3.5 0V873ZM1338.78 873V814.5a1.75 1.75 0 0 1 3.5 0V873ZM1343.46 873V844.9a1.75 1.75 0 0 1 3.5 0V873ZM1348.14 873V811.0a1.75 1.75 0 0 1 3.5 0V873ZM1352.82 873V768.3a1.75 1.75 0 0 1 3.5 0V873ZM1357.49 873V820.3a1.75 1.75 0 0 1 3.5 0V873ZM1362.17 873V822.1a1.75 1.75 0 0 1 3.5 0V873ZM1366.85 873V823.3a1.75 1.75 0 0 1 3.5 0V873ZM1371.53 873V839.1a1.75 1.75 0 0 1 3.5 0V873ZM1376.21 873V849.0a1.75 1.75 0 0 1 3.5 0V873ZM1380.89 873V844.3a1.75 1.75 0 0 1 3.5 0V873ZM1385.57 873V834.4a1.75 1.75 0 0 1 3.5 0V873ZM1390.25 873V818.0a1.75 1.75 0 0 1 3.5 0V873ZM1394.93 873V818.0a1.75 1.75 0 0 1 3.5 0V873ZM1399.61 873V799.3a1.75 1.75 0 0 1 3.5 0V873ZM1404.29 873V833.8a1.75 1.75 0 0 1 3.5 0V873ZM1408.96 873V850.2a1.75 1.75 0 0 1 3.5 0V873ZM1413.64 873V840.2a1.75 1.75 0 0 1 3.5 0V873ZM1418.32 873V813.3a1.75 1.75 0 0 1 3.5 0V873ZM1423.00 873V842.0a1.75 1.75 0 0 1 3.5 0V873ZM1427.68 873V846.7a1.75 1.75 0 0 1 3.5 0V873ZM1432.36 873V694.6a1.75 1.75 0 0 1 3.5 0V873ZM1437.04 873V730.8a1.75 1.75 0 0 1 3.5 0V873ZM1441.72 873V814.5a1.75 1.75 0 0 1 3.5 0V873ZM1446.40 873V811.0a1.75 1.75 0 0 1 3.5 0V873ZM1451.08 873V808.1a1.75 1.75 0 0 1 3.5 0V873ZM1455.75 873V842.0a1.75 1.75 0 0 1 3.5 0V873ZM1460.43 873V771.8a1.75 1.75 0 0 1 3.5 0V873ZM1465.11 873V802.2a1.75 1.75 0 0 1 3.5 0V873ZM1469.79 873V846.1a1.75 1.75 0 0 1 3.5 0V873ZM1474.47 873V852.5a1.75 1.75 0 0 1 3.5 0V873ZM1479.15 873V852.5a1.75 1.75 0 0 1 3.5 0V873ZM1483.83 873V847.8a1.75 1.75 0 0 1 3.5 0V873ZM1488.51 873V849.0a1.75 1.75 0 0 1 3.5 0V873ZM1493.19 873V805.1a1.75 1.75 0 0 1 3.5 0V873ZM1497.87 873V805.1a1.75 1.75 0 0 1 3.5 0V873ZM1502.54 873V854.3a1.75 1.75 0 0 1 3.5 0V873ZM1507.22 873V854.3a1.75 1.75 0 0 1 3.5 0V873ZM1511.90 873V834.4a1.75 1.75 0 0 1 3.5 0V873ZM1516.58 873V835.0a1.75 1.75 0 0 1 3.5 0V873ZM1521.26 873V795.8a1.75 1.75 0 0 1 3.5 0V873ZM1525.94 873V770.6a1.75 1.75 0 0 1 3.5 0V873ZM1530.62 873V799.3a1.75 1.75 0 0 1 3.5 0V873ZM1535.30 873V826.2a1.75 1.75 0 0 1 3.5 0V873ZM1539.98 873V826.2a1.75 1.75 0 0 1 3.5 0V873ZM1544.66 873V739.6a1.75 1.75 0 0 1 3.5 0V873ZM1549.33 873V771.2a1.75 1.75 0 0 1 3.5 0V873ZM1554.01 873V660.1a1.75 1.75 0 0 1 3.5 0V873ZM1558.69 873V806.3a1.75 1.75 0 0 1 3.5 0V873ZM1563.37 873V843.2a1.75 1.75 0 0 1 3.5 0V873ZM1568.05 873V844.3a1.75 1.75 0 0 1 3.5 0V873ZM1572.73 873V840.8a1.75 1.75 0 0 1 3.5 0V873ZM1577.41 873V851.4a1.75 1.75 0 0 1 3.5 0V873ZM1582.09 873V823.3a1.75 1.75 0 0 1 3.5 0V873ZM1586.77 873V800.5a1.75 1.75 0 0 1 3.5 0V873ZM1591.45 873V599.8a1.75 1.75 0 0 1 3.5 0V873ZM1596.12 873V536.6a1.75 1.75 0 0 1 3.5 0V873ZM1600.80 873V792.9a1.75 1.75 0 0 1 3.5 0V873ZM1605.48 873V788.2a1.75 1.75 0 0 1 3.5 0V873ZM1610.16 873V781.1a1.75 1.75 0 0 1 3.5 0V873ZM1614.84 873V815.1a1.75 1.75 0 0 1 3.5 0V873ZM1619.52 873V737.3a1.75 1.75 0 0 1 3.5 0V873ZM1624.20 873V757.8a1.75 1.75 0 0 1 3.5 0V873ZM1628.88 873V839.1a1.75 1.75 0 0 1 3.5 0V873ZM1633.56 873V844.3a1.75 1.75 0 0 1 3.5 0V873ZM1638.24 873V850.2a1.75 1.75 0 0 1 3.5 0V873ZM1642.91 873V863.0a1.75 1.75 0 0 1 3.5 0V873ZM1647.59 873V823.3a1.75 1.75 0 0 1 3.5 0V873ZM1652.27 873V839.1a1.75 1.75 0 0 1 3.5 0V873ZM1656.95 873V835.0a1.75 1.75 0 0 1 3.5 0V873ZM1661.63 873V820.3a1.75 1.75 0 0 1 3.5 0V873ZM1666.31 873V850.2a1.75 1.75 0 0 1 3.5 0V873ZM1670.99 873V834.4a1.75 1.75 0 0 1 3.5 0V873ZM1675.67 873V850.2a1.75 1.75 0 0 1 3.5 0V873ZM1680.35 873V830.3a1.75 1.75 0 0 1 3.5 0V873ZM1685.03 873V774.1a1.75 1.75 0 0 1 3.5 0V873ZM1689.70 873V801.0a1.75 1.75 0 0 1 3.5 0V873ZM1694.38 873V799.9a1.75 1.75 0 0 1 3.5 0V873ZM1699.06 873V827.4a1.75 1.75 0 0 1 3.5 0V873ZM1703.74 873V769.5a1.75 1.75 0 0 1 3.5 0V873ZM1708.42 873V795.8a1.75 1.75 0 0 1 3.5 0V873ZM1713.10 873V782.9a1.75 1.75 0 0 1 3.5 0V873ZM1717.78 873V773.5a1.75 1.75 0 0 1 3.5 0V873ZM1722.46 873V778.8a1.75 1.75 0 0 1 3.5 0V873ZM1727.14 873V802.8a1.75 1.75 0 0 1 3.5 0V873ZM1731.82 873V826.2a1.75 1.75 0 0 1 3.5 0V873ZM1736.49 873V836.7a1.75 1.75 0 0 1 3.5 0V873ZM1741.17 873V832.6a1.75 1.75 0 0 1 3.5 0V873ZM1745.85 873V821.5a1.75 1.75 0 0 1 3.5 0V873ZM1750.53 873V773.5a1.75 1.75 0 0 1 3.5 0V873ZM1755.21 873V830.9a1.75 1.75 0 0 1 3.5 0V873ZM1759.89 873V827.4a1.75 1.75 0 0 1 3.5 0V873ZM1764.57 873V828.5a1.75 1.75 0 0 1 3.5 0V873ZM1769.25 873V843.2a1.75 1.75 0 0 1 3.5 0V873ZM1773.93 873V849.6a1.75 1.75 0 0 1 3.5 0V873ZM1778.61 873V840.8a1.75 1.75 0 0 1 3.5 0V873ZM1783.28 873V847.8a1.75 1.75 0 0 1 3.5 0V873ZM1787.96 873V854.3a1.75 1.75 0 0 1 3.5 0V873ZM1792.64 873V861.3a1.75 1.75 0 0 1 3.5 0V873ZM1797.32 873V846.1a1.75 1.75 0 0 1 3.5 0V873ZM1802.00 873V798.1a1.75 1.75 0 0 1 3.5 0V873ZM1806.68 873V835.0a1.75 1.75 0 0 1 3.5 0V873ZM1811.36 873V829.1a1.75 1.75 0 0 1 3.5 0V873ZM1816.04 873V846.7a1.75 1.75 0 0 1 3.5 0V873ZM1820.72 873V846.7a1.75 1.75 0 0 1 3.5 0V873ZM1825.39 873V845.5a1.75 1.75 0 0 1 3.5 0V873ZM1830.07 873V864.2a1.75 1.75 0 0 1 3.5 0V873ZM1834.75 873V828.0a1.75 1.75 0 0 1 3.5 0V873ZM1839.43 873V776.5a1.75 1.75 0 0 1 3.5 0V873ZM1844.11 873V771.8a1.75 1.75 0 0 1 3.5 0V873ZM1848.79 873V770.0a1.75 1.75 0 0 1 3.5 0V873ZM1853.47 873V826.8a1.75 1.75 0 0 1 3.5 0V873ZM1858.15 873V862.5a1.75 1.75 0 0 1 3.5 0V873ZM1862.83 873V861.9a1.75 1.75 0 0 1 3.5 0V873ZM1867.51 873V847.8a1.75 1.75 0 0 1 3.5 0V873ZM1872.19 873V857.2a1.75 1.75 0 0 1 3.5 0V873ZM1876.86 873V773.5a1.75 1.75 0 0 1 3.5 0V873ZM1881.54 873V839.1a1.75 1.75 0 0 1 3.5 0V873ZM1886.22 873V825.0a1.75 1.75 0 0 1 3.5 0V873ZM1890.90 873V723.8a1.75 1.75 0 0 1 3.5 0V873ZM1895.58 873V772.4a1.75 1.75 0 0 1 3.5 0V873ZM1900.26 873V829.1a1.75 1.75 0 0 1 3.5 0V873ZM1904.94 873V842.0a1.75 1.75 0 0 1 3.5 0V873ZM1909.62 873V734.4a1.75 1.75 0 0 1 3.5 0V873ZM1914.30 873V784.1a1.75 1.75 0 0 1 3.5 0V873ZM1918.98 873V830.9a1.75 1.75 0 0 1 3.5 0V873ZM1923.65 873V833.8a1.75 1.75 0 0 1 3.5 0V873ZM1928.33 873V833.8a1.75 1.75 0 0 1 3.5 0V873ZM1933.01 873V853.7a1.75 1.75 0 0 1 3.5 0V873ZM1937.69 873V864.2a1.75 1.75 0 0 1 3.5 0V873ZM1942.37 873V862.5a1.75 1.75 0 0 1 3.5 0V873ZM1947.05 873V863.0a1.75 1.75 0 0 1 3.5 0V873ZM1951.73 873V850.8a1.75 1.75 0 0 1 3.5 0V873ZM1956.41 873V844.3a1.75 1.75 0 0 1 3.5 0V873ZM1961.09 873V856.6a1.75 1.75 0 0 1 3.5 0V873ZM1965.77 873V863.6a1.75 1.75 0 0 1 3.5 0V873ZM1970.44 873V862.5a1.75 1.75 0 0 1 3.5 0V873ZM1975.12 873V861.9a1.75 1.75 0 0 1 3.5 0V873ZM1979.80 873V853.7a1.75 1.75 0 0 1 3.5 0V873ZM1984.48 873V848.4a1.75 1.75 0 0 1 3.5 0V873ZM1989.16 873V835.0a1.75 1.75 0 0 1 3.5 0V873ZM1993.84 873V840.8a1.75 1.75 0 0 1 3.5 0V873ZM1998.52 873V828.0a1.75 1.75 0 0 1 3.5 0V873ZM2003.20 873V856.6a1.75 1.75 0 0 1 3.5 0V873ZM2007.88 873V846.7a1.75 1.75 0 0 1 3.5 0V873ZM2012.56 873V852.5a1.75 1.75 0 0 1 3.5 0V873ZM2017.23 873V830.3a1.75 1.75 0 0 1 3.5 0V873ZM2021.91 873V853.7a1.75 1.75 0 0 1 3.5 0V873ZM2026.59 873V857.2a1.75 1.75 0 0 1 3.5 0V873ZM2031.27 873V863.0a1.75 1.75 0 0 1 3.5 0V873ZM2035.95 873V849.0a1.75 1.75 0 0 1 3.5 0V873ZM2040.63 873V833.8a1.75 1.75 0 0 1 3.5 0V873ZM2045.31 873V843.2a1.75 1.75 0 0 1 3.5 0V873ZM2049.99 873V855.4a1.75 1.75 0 0 1 3.5 0V873ZM2054.67 873V864.2a1.75 1.75 0 0 1 3.5 0V873ZM2059.35 873V851.9a1.75 1.75 0 0 1 3.5 0V873ZM2064.02 873V863.0a1.75 1.75 0 0 1 3.5 0V873ZM2068.70 873V858.4a1.75 1.75 0 0 1 3.5 0V873ZM2073.38 873V857.8a1.75 1.75 0 0 1 3.5 0V873ZM2078.06 873V861.9a1.75 1.75 0 0 1 3.5 0V873ZM2082.74 873V857.2a1.75 1.75 0 0 1 3.5 0V873ZM2087.42 873V856.6a1.75 1.75 0 0 1 3.5 0V873ZM2092.10 873V859.5a1.75 1.75 0 0 1 3.5 0V873ZM2096.78 873V857.2a1.75 1.75 0 0 1 3.5 0V873ZM2101.46 873V849.0a1.75 1.75 0 0 1 3.5 0V873ZM2106.14 873V815.7a1.75 1.75 0 0 1 3.5 0V873ZM2110.81 873V812.7a1.75 1.75 0 0 1 3.5 0V873ZM2115.49 873V837.3a1.75 1.75 0 0 1 3.5 0V873ZM2120.17 873V781.1a1.75 1.75 0 0 1 3.5 0V873ZM2124.85 873V840.2a1.75 1.75 0 0 1 3.5 0V873ZM2129.53 873V863.0a1.75 1.75 0 0 1 3.5 0V873ZM2134.21 873V858.4a1.75 1.75 0 0 1 3.5 0V873ZM2138.89 873V819.8a1.75 1.75 0 0 1 3.5 0V873ZM2143.57 873V817.4a1.75 1.75 0 0 1 3.5 0V873ZM2148.25 873V852.5a1.75 1.75 0 0 1 3.5 0V873ZM2152.93 873V863.0a1.75 1.75 0 0 1 3.5 0V873ZM2157.60 873V836.1a1.75 1.75 0 0 1 3.5 0V873ZM2162.28 873V849.0a1.75 1.75 0 0 1 3.5 0V873ZM2166.96 873V857.8a1.75 1.75 0 0 1 3.5 0V873ZM2171.64 873V856.6a1.75 1.75 0 0 1 3.5 0V873ZM2176.32 873V866.0a1.75 1.75 0 0 1 3.5 0V873ZM2181.00 873V868.3a1.75 1.75 0 0 1 3.5 0V873ZM2185.68 873V861.9a1.75 1.75 0 0 1 3.5 0V873ZM2190.36 873V859.0a1.75 1.75 0 0 1 3.5 0V873ZM2195.04 873V850.2a1.75 1.75 0 0 1 3.5 0V873ZM2199.72 873V847.8a1.75 1.75 0 0 1 3.5 0V873ZM2204.39 873V861.9a1.75 1.75 0 0 1 3.5 0V873ZM2209.07 873V840.2a1.75 1.75 0 0 1 3.5 0V873ZM2213.75 873V833.8a1.75 1.75 0 0 1 3.5 0V873ZM2218.43 873V851.9a1.75 1.75 0 0 1 3.5 0V873ZM2223.11 873V860.1a1.75 1.75 0 0 1 3.5 0V873ZM2227.79 873V863.0a1.75 1.75 0 0 1 3.5 0V873ZM2232.47 873V854.9a1.75 1.75 0 0 1 3.5 0V873ZM2237.15 873V814.5a1.75 1.75 0 0 1 3.5 0V873ZM2241.83 873V806.9a1.75 1.75 0 0 1 3.5 0V873ZM2246.51 873V849.6a1.75 1.75 0 0 1 3.5 0V873ZM2251.18 873V865.4a1.75 1.75 0 0 1 3.5 0V873ZM2255.86 873V853.1a1.75 1.75 0 0 1 3.5 0V873ZM2260.54 873V854.9a1.75 1.75 0 0 1 3.5 0V873ZM2265.22 873V861.3a1.75 1.75 0 0 1 3.5 0V873ZM2269.90 873V844.9a1.75 1.75 0 0 1 3.5 0V873ZM2274.58 873V859.5a1.75 1.75 0 0 1 3.5 0V873ZM2279.26 873V864.8a1.75 1.75 0 0 1 3.5 0V873ZM2283.94 873V861.9a1.75 1.75 0 0 1 3.5 0V873ZM2288.62 873V861.3a1.75 1.75 0 0 1 3.5 0V873ZM2293.30 873V852.5a1.75 1.75 0 0 1 3.5 0V873ZM2297.97 873V850.2a1.75 1.75 0 0 1 3.5 0V873ZM2302.65 873V849.0a1.75 1.75 0 0 1 3.5 0V873ZM2307.33 873V859.5a1.75 1.75 0 0 1 3.5 0V873ZM2312.01 873V865.4a1.75 1.75 0 0 1 3.5 0V873ZM2316.69 873V860.1a1.75 1.75 0 0 1 3.5 0V873ZM2321.37 873V849.0a1.75 1.75 0 0 1 3.5 0V873ZM2326.05 873V845.5a1.75 1.75 0 0 1 3.5 0V873ZM2330.73 873V846.1a1.75 1.75 0 0 1 3.5 0V873ZM2335.41 873V872.4a1.75 1.75 0 0 1 3.5 0V873Z"/>
<text class="ax" x="634" y="912" text-anchor="middle" style="fill:#5b5b5b;font-size:19.5px">Jan 4</text>
<text class="ax" x="751" y="912" text-anchor="middle" style="fill:#5b5b5b;font-size:19.5px">Jan 29</text>
<text class="ax" x="877" y="912" text-anchor="middle" style="fill:#5b5b5b;font-size:19.5px">Feb 25</text>
<text class="ax" x="1004" y="912" text-anchor="middle" style="fill:#5b5b5b;font-size:19.5px">Mar 23</text>
<text class="ax" x="1125" y="912" text-anchor="middle" style="fill:#5b5b5b;font-size:19.5px">Apr 18</text>
<text class="ax" x="1247" y="912" text-anchor="middle" style="fill:#5b5b5b;font-size:19.5px">May 14</text>
<text class="ax" x="1369" y="912" text-anchor="middle" style="fill:#5b5b5b;font-size:19.5px">Jun 9</text>
<text class="ax" x="1477" y="912" text-anchor="middle" style="fill:#5b5b5b;font-size:19.5px">Jul 2</text>
<text class="ax" x="1588" y="912" text-anchor="middle" style="fill:#5b5b5b;font-size:19.5px">Jul 26</text>
<text class="ax" x="1710" y="912" text-anchor="middle" style="fill:#5b5b5b;font-size:19.5px">Aug 21</text>
<text class="ax" x="1832" y="912" text-anchor="middle" style="fill:#5b5b5b;font-size:19.5px">Sep 16</text>
<text class="ax" x="1954" y="912" text-anchor="middle" style="fill:#5b5b5b;font-size:19.5px">Oct 12</text>
<text class="ax" x="2070" y="912" text-anchor="middle" style="fill:#5b5b5b;font-size:19.5px">Nov 6</text>
<text class="ax" x="2188" y="912" text-anchor="middle" style="fill:#5b5b5b;font-size:19.5px">Dec 1</text>
<text class="ax" x="2310" y="912" text-anchor="middle" style="fill:#5b5b5b;font-size:19.5px">Dec 27</text>
<rect x="632" y="1066.0" width="776" height="1.2" fill="#e3e3e3"/>
<text class="ax" x="618" y="1079.5" text-anchor="end">55</text>
<rect x="632" y="1148.2" width="776" height="1.2" fill="#e3e3e3"/>
<text class="ax" x="618" y="1155.7" text-anchor="end">11</text>
<rect x="632" y="1204.3" width="776" height="1.2" fill="#e3e3e3"/>
<text class="ax" x="618" y="1211.8" text-anchor="end">-19</text>
<rect x="632" y="1260.4" width="776" height="1.2" fill="#e3e3e3"/>
<text class="ax" x="618" y="1267.9" text-anchor="end">-49</text>
<path fill="#4a90e2" d="M632.00 1168.7V1166.4h2.18V1168.7ZM634.13 1168.7V1162.3h2.18V1168.7ZM636.25 1168.7V1164.8h2.18V1168.7ZM638.38 1168.7V1160.4h2.18V1168.7ZM640.50 1168.7V1163.2h2.18V1168.7ZM642.63 1168.7V1155.6h2.18V1168.7ZM644.76 1168.7V1158.6h2.18V1168.7ZM646.88 1168.7V1157.1h2.18V1168.7ZM649.01 1168.7V1159.3h2.18V1168.7ZM651.13 1168.7V1154.6h2.18V1168.7ZM653.26 1168.7V1155.4h2.18V1168.7ZM655.39 1168.7V1154.3h2.18V1168.7ZM657.51 1168.7V1157.6h2.18V1168.7ZM659.64 1168.7V1156.8h2.18V1168.7ZM661.76 1168.7V1158.8h2.18V1168.7ZM663.89 1168.7V1158.6h2.18V1168.7ZM666.02 1168.7V1157.0h2.18V1168.7ZM668.14 1168.7V1160.7h2.18V1168.7ZM670.27 1168.7V1157.5h2.18V1168.7ZM672.39 1168.7V1160.3h2.18V1168.7ZM674.52 1168.7V1160.3h2.18V1168.7ZM676.65 1168.7V1157.5h2.18V1168.7ZM678.77 1168.7V1163.0h2.18V1168.7ZM680.90 1168.7V1160.4h2.18V1168.7ZM683.02 1168.7V1158.5h2.18V1168.7ZM685.15 1168.7V1161.0h2.18V1168.7ZM687.28 1168.7V1158.9h2.18V1168.7ZM689.40 1168.7V1157.2h2.18V1168.7ZM691.53 1168.7V1161.5h2.18V1168.7ZM693.65 1168.7V1160.2h2.18V1168.7ZM695.78 1168.7V1155.6h2.18V1168.7ZM697.91 1168.7V1160.9h2.18V1168.7ZM700.03 1168.7V1165.9h2.18V1168.7ZM702.16 1168.7V1167.4h2.18V1168.7ZM704.28 1168.7V1161.6h2.18V1168.7ZM706.41 1168.7V1158.5h2.18V1168.7ZM708.54 1168.7V1162.4h2.18V1168.7ZM710.66 1168.7V1165.0h2.18V1168.7ZM712.79 1168.7V1161.0h2.18V1168.7ZM714.92 1168.7V1162.7h2.18V1168.7ZM717.04 1168.7V1161.0h2.18V1168.7ZM719.17 1168.7V1162.6h2.18V1168.7ZM721.29 1168.7V1160.4h2.18V1168.7ZM723.42 1168.7V1154.9h2.18V1168.7ZM725.55 1168.7V1160.7h2.18V1168.7ZM727.67 1168.7V1159.6h2.18V1168.7ZM729.80 1168.7V1164.3h2.18V1168.7ZM731.92 1168.7V1163.1h2.18V1168.7ZM734.05 1168.7V1164.6h2.18V1168.7ZM736.18 1168.7V1164.6h2.18V1168.7ZM738.30 1168.7V1162.4h2.18V1168.7ZM740.43 1168.7V1159.8h2.18V1168.7ZM742.55 1168.7V1156.0h2.18V1168.7ZM744.68 1168.7V1155.2h2.18V1168.7ZM746.81 1168.7V1159.6h2.18V1168.7ZM748.93 1168.7V1158.9h2.18V1168.7ZM751.06 1168.7V1162.5h2.18V1168.7ZM753.18 1168.7V1162.7h2.18V1168.7ZM755.31 1168.7V1160.7h2.18V1168.7ZM757.44 1168.7V1159.1h2.18V1168.7ZM759.56 1168.7V1163.9h2.18V1168.7ZM761.69 1168.7V1167.8h2.18V1168.7ZM763.81 1168.7V1162.4h2.18V1168.7ZM765.94 1168.7V1167.4h2.18V1168.7ZM768.07 1168.7V1166.1h2.18V1168.7ZM770.19 1168.7V1165.3h2.18V1168.7ZM772.32 1168.7V1154.4h2.18V1168.7ZM774.44 1168.7V1161.7h2.18V1168.7ZM776.57 1168.7V1164.3h2.18V1168.7ZM778.70 1168.7V1161.4h2.18V1168.7ZM780.82 1168.7V1158.6h2.18V1168.7ZM782.95 1168.7V1158.8h2.18V1168.7ZM785.07 1168.7V1156.7h2.18V1168.7ZM787.20 1168.7V1158.3h2.18V1168.7ZM789.33 1168.7V1163.4h2.18V1168.7ZM791.45 1168.7V1163.9h2.18V1168.7ZM793.58 1168.7V1164.2h2.18V1168.7ZM795.70 1168.7V1162.4h2.18V1168.7ZM797.83 1168.7V1163.8h2.18V1168.7ZM799.96 1168.7V1161.2h2.18V1168.7ZM802.08 1168.7V1161.2h2.18V1168.7ZM804.21 1168.7V1166.5h2.18V1168.7ZM806.33 1168.7V1167.5h2.18V1168.7ZM808.46 1168.7V1162.9h2.18V1168.7ZM810.59 1168.7V1167.2h2.18V1168.7ZM812.71 1168.7V1160.6h2.18V1168.7ZM814.84 1168.7V1163.2h2.18V1168.7ZM816.96 1168.7V1163.4h2.18V1168.7ZM819.09 1168.7V1163.5h2.18V1168.7ZM821.22 1168.7V1165.5h2.18V1168.7ZM823.34 1168.7V1162.6h2.18V1168.7ZM825.47 1168.7V1164.0h2.18V1168.7ZM827.59 1168.7V1167.8h2.18V1168.7ZM829.72 1168.7V1167.8h2.18V1168.7ZM831.85 1168.7V1166.1h2.18V1168.7ZM833.97 1168.7V1167.8h2.18V1168.7ZM836.10 1168.7V1166.3h2.18V1168.7ZM838.22 1168.7V1163.8h2.18V1168.7ZM840.35 1168.7V1161.2h2.18V1168.7ZM842.48 1168.7V1161.3h2.18V1168.7ZM844.60 1168.7V1163.6h2.18V1168.7ZM846.73 1168.7V1165.9h2.18V1168.7ZM848.85 1168.7V1162.9h2.18V1168.7ZM850.98 1168.7V1164.9h2.18V1168.7ZM853.11 1168.7V1167.4h2.18V1168.7ZM855.23 1168.7V1167.8h2.18V1168.7ZM857.36 1168.7V1165.6h2.18V1168.7ZM859.48 1168.7V1165.0h2.18V1168.7ZM861.61 1168.7V1167.3h2.18V1168.7ZM863.74 1168.7V1167.0h2.18V1168.7ZM865.86 1168.7V1163.0h2.18V1168.7ZM867.99 1168.7V1167.8h2.18V1168.7ZM870.12 1168.7V1164.9h2.18V1168.7ZM872.24 1168.7V1160.3h2.18V1168.7ZM874.37 1168.7V1163.1h2.18V1168.7ZM876.49 1168.7V1162.1h2.18V1168.7ZM878.62 1168.7V1165.6h2.18V1168.7ZM880.75 1168.7V1161.7h2.18V1168.7ZM882.87 1168.7V1159.0h2.18V1168.7ZM885.00 1168.7V1165.3h2.18V1168.7ZM887.12 1168.7V1164.5h2.18V1168.7ZM889.25 1168.7V1163.2h2.18V1168.7ZM891.38 1168.7V1163.7h2.18V1168.7ZM893.50 1168.7V1165.7h2.18V1168.7ZM895.63 1168.7V1167.1h2.18V1168.7ZM897.75 1168.7V1158.9h2.18V1168.7ZM899.88 1168.7V1156.5h2.18V1168.7ZM902.01 1168.7V1156.9h2.18V1168.7ZM904.13 1168.7V1160.5h2.18V1168.7ZM906.26 1168.7V1159.3h2.18V1168.7ZM908.38 1168.7V1157.8h2.18V1168.7ZM910.51 1168.7V1154.0h2.18V1168.7ZM912.64 1168.7V1161.5h2.18V1168.7ZM914.76 1168.7V1159.9h2.18V1168.7ZM916.89 1168.7V1157.1h2.18V1168.7ZM919.01 1168.7V1161.4h2.18V1168.7ZM921.14 1168.7V1167.8h2.18V1168.7ZM923.27 1168.7V1167.0h2.18V1168.7ZM925.39 1168.7V1159.5h2.18V1168.7ZM927.52 1168.7V1164.0h2.18V1168.7ZM929.64 1168.7V1167.8h2.18V1168.7ZM931.77 1168.7V1167.8h2.18V1168.7ZM933.90 1168.7V1163.4h2.18V1168.7ZM936.02 1168.7V1164.3h2.18V1168.7ZM938.15 1168.7V1165.0h2.18V1168.7ZM940.27 1168.7V1162.1h2.18V1168.7ZM942.40 1168.7V1160.9h2.18V1168.7ZM944.53 1168.7V1161.1h2.18V1168.7ZM946.65 1168.7V1163.1h2.18V1168.7ZM948.78 1168.7V1164.1h2.18V1168.7ZM950.90 1168.7V1167.8h2.18V1168.7ZM953.03 1168.7V1164.8h2.18V1168.7ZM955.16 1168.7V1167.8h2.18V1168.7ZM957.28 1168.7V1163.5h2.18V1168.7ZM959.41 1168.7V1165.5h2.18V1168.7ZM961.53 1168.7V1164.7h2.18V1168.7ZM963.66 1168.7V1164.5h2.18V1168.7ZM965.79 1168.7V1158.2h2.18V1168.7ZM967.91 1168.7V1165.6h2.18V1168.7ZM970.04 1168.7V1161.6h2.18V1168.7ZM972.16 1168.7V1167.8h2.18V1168.7ZM974.29 1168.7V1163.7h2.18V1168.7ZM976.42 1168.7V1164.1h2.18V1168.7ZM978.54 1168.7V1164.4h2.18V1168.7ZM980.67 1168.7V1154.3h2.18V1168.7ZM982.79 1168.7V1166.1h2.18V1168.7ZM984.92 1168.7V1162.5h2.18V1168.7ZM987.05 1168.7V1162.5h2.18V1168.7ZM989.17 1168.7V1163.5h2.18V1168.7ZM991.30 1168.7V1162.0h2.18V1168.7ZM993.42 1168.7V1163.3h2.18V1168.7ZM995.55 1168.7V1157.1h2.18V1168.7ZM997.68 1168.7V1159.3h2.18V1168.7ZM999.80 1168.7V1158.8h2.18V1168.7ZM1001.93 1168.7V1158.5h2.18V1168.7ZM1004.05 1168.7V1156.6h2.18V1168.7ZM1006.18 1168.7V1158.8h2.18V1168.7ZM1008.31 1168.7V1161.8h2.18V1168.7ZM1010.43 1168.7V1161.3h2.18V1168.7ZM1012.56 1168.7V1158.0h2.18V1168.7ZM1014.68 1168.7V1162.2h2.18V1168.7ZM1016.81 1168.7V1163.9h2.18V1168.7ZM1018.94 1168.7V1160.8h2.18V1168.7ZM1021.06 1168.7V1159.3h2.18V1168.7ZM1023.19 1168.7V1159.4h2.18V1168.7ZM1025.32 1168.7V1160.9h2.18V1168.7ZM1027.44 1168.7V1160.2h2.18V1168.7ZM1029.57 1168.7V1161.6h2.18V1168.7ZM1031.69 1168.7V1158.9h2.18V1168.7ZM1033.82 1168.7V1161.8h2.18V1168.7ZM1035.95 1168.7V1157.9h2.18V1168.7ZM1038.07 1168.7V1158.7h2.18V1168.7ZM1040.20 1168.7V1160.8h2.18V1168.7ZM1042.32 1168.7V1157.3h2.18V1168.7ZM1044.45 1168.7V1158.1h2.18V1168.7ZM1046.58 1168.7V1154.9h2.18V1168.7ZM1048.70 1168.7V1162.2h2.18V1168.7ZM1050.83 1168.7V1154.9h2.18V1168.7ZM1052.95 1168.7V1159.6h2.18V1168.7ZM1055.08 1168.7V1160.4h2.18V1168.7ZM1057.21 1168.7V1161.0h2.18V1168.7ZM1059.33 1168.7V1160.6h2.18V1168.7ZM1061.46 1168.7V1160.3h2.18V1168.7ZM1063.58 1168.7V1161.2h2.18V1168.7ZM1065.71 1168.7V1163.4h2.18V1168.7ZM1067.84 1168.7V1164.4h2.18V1168.7ZM1069.96 1168.7V1164.5h2.18V1168.7ZM1072.09 1168.7V1163.9h2.18V1168.7ZM1074.21 1168.7V1167.7h2.18V1168.7ZM1076.34 1168.7V1160.9h2.18V1168.7ZM1078.47 1168.7V1157.3h2.18V1168.7ZM1080.59 1168.7V1162.9h2.18V1168.7ZM1082.72 1168.7V1163.8h2.18V1168.7ZM1084.84 1168.7V1157.3h2.18V1168.7ZM1086.97 1168.7V1158.2h2.18V1168.7ZM1089.10 1168.7V1157.2h2.18V1168.7ZM1091.22 1168.7V1159.8h2.18V1168.7ZM1093.35 1168.7V1155.9h2.18V1168.7ZM1095.47 1168.7V1164.8h2.18V1168.7ZM1097.60 1168.7V1163.3h2.18V1168.7ZM1099.73 1168.7V1162.8h2.18V1168.7ZM1101.85 1168.7V1163.6h2.18V1168.7ZM1103.98 1168.7V1155.9h2.18V1168.7ZM1106.10 1168.7V1158.0h2.18V1168.7ZM1108.23 1168.7V1153.4h2.18V1168.7ZM1110.36 1168.7V1161.3h2.18V1168.7ZM1112.48 1168.7V1156.3h2.18V1168.7ZM1114.61 1168.7V1155.3h2.18V1168.7ZM1116.73 1168.7V1161.3h2.18V1168.7ZM1118.86 1168.7V1159.1h2.18V1168.7ZM1120.99 1168.7V1159.3h2.18V1168.7ZM1123.11 1168.7V1163.5h2.18V1168.7ZM1125.24 1168.7V1163.4h2.18V1168.7ZM1127.36 1168.7V1165.5h2.18V1168.7ZM1129.49 1168.7V1159.5h2.18V1168.7ZM1131.62 1168.7V1161.1h2.18V1168.7ZM1133.74 1168.7V1160.5h2.18V1168.7ZM1135.87 1168.7V1154.7h2.18V1168.7ZM1137.99 1168.7V1163.3h2.18V1168.7ZM1140.12 1168.7V1161.2h2.18V1168.7ZM1142.25 1168.7V1157.4h2.18V1168.7ZM1144.37 1168.7V1156.1h2.18V1168.7ZM1146.50 1168.7V1154.2h2.18V1168.7ZM1148.62 1168.7V1165.1h2.18V1168.7ZM1150.75 1168.7V1158.4h2.18V1168.7ZM1152.88 1168.7V1156.6h2.18V1168.7ZM1155.00 1168.7V1158.0h2.18V1168.7ZM1157.13 1168.7V1155.2h2.18V1168.7ZM1159.25 1168.7V1159.8h2.18V1168.7ZM1161.38 1168.7V1162.5h2.18V1168.7ZM1163.51 1168.7V1162.0h2.18V1168.7ZM1165.63 1168.7V1066.5h2.18V1168.7ZM1167.76 1168.7V1157.2h2.18V1168.7ZM1169.88 1168.7V1158.6h2.18V1168.7ZM1172.01 1168.7V1159.4h2.18V1168.7ZM1174.14 1168.7V1160.1h2.18V1168.7ZM1176.26 1168.7V1161.3h2.18V1168.7ZM1178.39 1168.7V1162.1h2.18V1168.7ZM1180.52 1168.7V1161.2h2.18V1168.7ZM1182.64 1168.7V1166.8h2.18V1168.7ZM1184.77 1168.7V1163.5h2.18V1168.7ZM1186.89 1168.7V1157.2h2.18V1168.7ZM1189.02 1168.7V1161.5h2.18V1168.7ZM1191.15 1168.7V1156.4h2.18V1168.7ZM1193.27 1168.7V1157.4h2.18V1168.7ZM1195.40 1168.7V1158.9h2.18V1168.7ZM1197.52 1168.7V1157.3h2.18V1168.7ZM1199.65 1168.7V1161.9h2.18V1168.7ZM1201.78 1168.7V1154.9h2.18V1168.7ZM1203.90 1168.7V1159.0h2.18V1168.7ZM1206.03 1168.7V1156.7h2.18V1168.7ZM1208.15 1168.7V1156.7h2.18V1168.7ZM1210.28 1168.7V1161.2h2.18V1168.7ZM1212.41 1168.7V1159.1h2.18V1168.7ZM1214.53 1168.7V1155.9h2.18V1168.7ZM1216.66 1168.7V1157.4h2.18V1168.7ZM1218.78 1168.7V1155.4h2.18V1168.7ZM1220.91 1168.7V1162.5h2.18V1168.7ZM1223.04 1168.7V1159.2h2.18V1168.7ZM1225.16 1168.7V1156.5h2.18V1168.7ZM1227.29 1168.7V1158.9h2.18V1168.7ZM1229.41 1168.7V1158.5h2.18V1168.7ZM1231.54 1168.7V1158.7h2.18V1168.7ZM1233.67 1168.7V1160.9h2.18V1168.7ZM1235.79 1168.7V1161.2h2.18V1168.7ZM1237.92 1168.7V1160.4h2.18V1168.7ZM1240.04 1168.7V1154.2h2.18V1168.7ZM1242.17 1168.7V1157.1h2.18V1168.7ZM1244.30 1168.7V1156.7h2.18V1168.7ZM1246.42 1168.7V1158.1h2.18V1168.7ZM1248.55 1168.7V1163.4h2.18V1168.7ZM1250.67 1168.7V1159.7h2.18V1168.7ZM1252.80 1168.7V1159.8h2.18V1168.7ZM1254.93 1168.7V1163.1h2.18V1168.7ZM1257.05 1168.7V1156.2h2.18V1168.7ZM1259.18 1168.7V1163.5h2.18V1168.7ZM1261.30 1168.7V1165.2h2.18V1168.7ZM1263.43 1168.7V1163.5h2.18V1168.7ZM1265.56 1168.7V1160.2h2.18V1168.7ZM1267.68 1168.7V1160.0h2.18V1168.7ZM1269.81 1168.7V1157.2h2.18V1168.7ZM1271.93 1168.7V1162.2h2.18V1168.7ZM1274.06 1168.7V1165.4h2.18V1168.7ZM1276.19 1168.7V1158.2h2.18V1168.7ZM1278.31 1168.7V1165.0h2.18V1168.7ZM1280.44 1168.7V1165.9h2.18V1168.7ZM1282.56 1168.7V1166.7h2.18V1168.7ZM1284.69 1168.7V1165.8h2.18V1168.7ZM1286.82 1168.7V1164.5h2.18V1168.7ZM1288.94 1168.7V1164.8h2.18V1168.7ZM1291.07 1168.7V1158.7h2.18V1168.7ZM1293.19 1168.7V1159.5h2.18V1168.7ZM1295.32 1168.7V1165.2h2.18V1168.7ZM1297.45 1168.7V1165.7h2.18V1168.7ZM1299.57 1168.7V1167.8h2.18V1168.7ZM1301.70 1168.7V1167.0h2.18V1168.7ZM1303.82 1168.7V1162.5h2.18V1168.7ZM1305.95 1168.7V1163.5h2.18V1168.7ZM1308.08 1168.7V1167.8h2.18V1168.7ZM1310.20 1168.7V1165.9h2.18V1168.7ZM1312.33 1168.7V1166.9h2.18V1168.7ZM1314.45 1168.7V1165.1h2.18V1168.7ZM1316.58 1168.7V1165.8h2.18V1168.7ZM1318.71 1168.7V1162.1h2.18V1168.7ZM1320.83 1168.7V1159.1h2.18V1168.7ZM1322.96 1168.7V1161.5h2.18V1168.7ZM1325.08 1168.7V1160.0h2.18V1168.7ZM1327.21 1168.7V1164.7h2.18V1168.7ZM1329.34 1168.7V1156.7h2.18V1168.7ZM1331.46 1168.7V1157.3h2.18V1168.7ZM1333.59 1168.7V1162.4h2.18V1168.7ZM1335.72 1168.7V1160.5h2.18V1168.7ZM1337.84 1168.7V1165.3h2.18V1168.7ZM1339.97 1168.7V1164.4h2.18V1168.7ZM1342.09 1168.7V1167.8h2.18V1168.7ZM1344.22 1168.7V1160.6h2.18V1168.7ZM1346.35 1168.7V1166.7h2.18V1168.7ZM1348.47 1168.7V1167.2h2.18V1168.7ZM1350.60 1168.7V1166.6h2.18V1168.7ZM1352.72 1168.7V1166.2h2.18V1168.7ZM1354.85 1168.7V1166.1h2.18V1168.7ZM1356.98 1168.7V1162.3h2.18V1168.7ZM1359.10 1168.7V1164.0h2.18V1168.7ZM1361.23 1168.7V1162.4h2.18V1168.7ZM1363.35 1168.7V1167.2h2.18V1168.7ZM1365.48 1168.7V1164.9h2.18V1168.7ZM1367.61 1168.7V1163.6h2.18V1168.7ZM1369.73 1168.7V1167.3h2.18V1168.7ZM1371.86 1168.7V1164.1h2.18V1168.7ZM1373.98 1168.7V1154.3h2.18V1168.7ZM1376.11 1168.7V1157.3h2.18V1168.7ZM1378.24 1168.7V1160.2h2.18V1168.7ZM1380.36 1168.7V1159.1h2.18V1168.7ZM1382.49 1168.7V1160.6h2.18V1168.7ZM1384.61 1168.7V1156.7h2.18V1168.7ZM1386.74 1168.7V1162.8h2.18V1168.7ZM1388.87 1168.7V1156.8h2.18V1168.7ZM1390.99 1168.7V1157.6h2.18V1168.7ZM1393.12 1168.7V1158.4h2.18V1168.7ZM1395.24 1168.7V1158.6h2.18V1168.7ZM1397.37 1168.7V1160.4h2.18V1168.7ZM1399.50 1168.7V1158.4h2.18V1168.7ZM1401.62 1168.7V1162.9h2.18V1168.7ZM1403.75 1168.7V1157.1h2.18V1168.7ZM1405.87 1168.7V1160.4h2.18V1168.7Z"/>
<path fill="#d9453c" d="M632.00 1169.9V1172.9h2.18V1169.9ZM634.13 1169.9V1170.6h2.18V1169.9ZM636.25 1169.9V1170.3h2.18V1169.9ZM638.38 1169.9V1170.4h2.18V1169.9ZM640.50 1169.9V1171.8h2.18V1169.9ZM642.63 1169.9V1170.3h2.18V1169.9ZM644.76 1169.9V1172.3h2.18V1169.9ZM646.88 1169.9V1174.1h2.18V1169.9ZM649.01 1169.9V1170.8h2.18V1169.9ZM651.13 1169.9V1172.5h2.18V1169.9ZM653.26 1169.9V1171.1h2.18V1169.9ZM655.39 1169.9V1171.9h2.18V1169.9ZM657.51 1169.9V1176.2h2.18V1169.9ZM659.64 1169.9V1170.6h2.18V1169.9ZM661.76 1169.9V1173.2h2.18V1169.9ZM663.89 1169.9V1181.2h2.18V1169.9ZM666.02 1169.9V1171.6h2.18V1169.9ZM668.14 1169.9V1170.7h2.18V1169.9ZM670.27 1169.9V1181.4h2.18V1169.9ZM672.39 1169.9V1170.7h2.18V1169.9ZM674.52 1169.9V1178.2h2.18V1169.9ZM676.65 1169.9V1171.1h2.18V1169.9ZM678.77 1169.9V1171.2h2.18V1169.9ZM680.90 1169.9V1172.1h2.18V1169.9ZM683.02 1169.9V1170.5h2.18V1169.9ZM685.15 1169.9V1170.8h2.18V1169.9ZM687.28 1169.9V1170.7h2.18V1169.9ZM689.40 1169.9V1173.6h2.18V1169.9ZM691.53 1169.9V1170.4h2.18V1169.9ZM693.65 1169.9V1172.2h2.18V1169.9ZM695.78 1169.9V1170.5h2.18V1169.9ZM697.91 1169.9V1172.8h2.18V1169.9ZM700.03 1169.9V1172.0h2.18V1169.9ZM702.16 1169.9V1172.9h2.18V1169.9ZM704.28 1169.9V1171.3h2.18V1169.9ZM706.41 1169.9V1171.0h2.18V1169.9ZM708.54 1169.9V1172.5h2.18V1169.9ZM710.66 1169.9V1172.3h2.18V1169.9ZM712.79 1169.9V1171.0h2.18V1169.9ZM714.92 1169.9V1170.7h2.18V1169.9ZM717.04 1169.9V1178.0h2.18V1169.9ZM719.17 1169.9V1171.9h2.18V1169.9ZM721.29 1169.9V1170.6h2.18V1169.9ZM723.42 1169.9V1171.7h2.18V1169.9ZM725.55 1169.9V1173.3h2.18V1169.9ZM727.67 1169.9V1172.5h2.18V1169.9ZM729.80 1169.9V1172.6h2.18V1169.9ZM731.92 1169.9V1170.3h2.18V1169.9ZM734.05 1169.9V1171.6h2.18V1169.9ZM736.18 1169.9V1171.7h2.18V1169.9ZM738.30 1169.9V1170.6h2.18V1169.9ZM740.43 1169.9V1171.0h2.18V1169.9ZM742.55 1169.9V1171.6h2.18V1169.9ZM744.68 1169.9V1173.4h2.18V1169.9ZM746.81 1169.9V1170.4h2.18V1169.9ZM748.93 1169.9V1172.5h2.18V1169.9ZM751.06 1169.9V1170.4h2.18V1169.9ZM753.18 1169.9V1171.5h2.18V1169.9ZM755.31 1169.9V1171.6h2.18V1169.9ZM757.44 1169.9V1180.1h2.18V1169.9ZM759.56 1169.9V1171.6h2.18V1169.9ZM761.69 1169.9V1171.4h2.18V1169.9ZM763.81 1169.9V1171.6h2.18V1169.9ZM765.94 1169.9V1173.2h2.18V1169.9ZM768.07 1169.9V1170.8h2.18V1169.9ZM770.19 1169.9V1170.9h2.18V1169.9ZM772.32 1169.9V1176.3h2.18V1169.9ZM774.44 1169.9V1171.3h2.18V1169.9ZM776.57 1169.9V1171.3h2.18V1169.9ZM778.70 1169.9V1171.4h2.18V1169.9ZM780.82 1169.9V1170.8h2.18V1169.9ZM782.95 1169.9V1173.8h2.18V1169.9ZM785.07 1169.9V1179.5h2.18V1169.9ZM787.20 1169.9V1172.2h2.18V1169.9ZM789.33 1169.9V1171.5h2.18V1169.9ZM791.45 1169.9V1170.4h2.18V1169.9ZM793.58 1169.9V1170.7h2.18V1169.9ZM795.70 1169.9V1170.8h2.18V1169.9ZM797.83 1169.9V1170.4h2.18V1169.9ZM799.96 1169.9V1170.6h2.18V1169.9ZM802.08 1169.9V1171.9h2.18V1169.9ZM804.21 1169.9V1171.4h2.18V1169.9ZM806.33 1169.9V1172.4h2.18V1169.9ZM808.46 1169.9V1172.0h2.18V1169.9ZM810.59 1169.9V1176.3h2.18V1169.9ZM812.71 1169.9V1171.2h2.18V1169.9ZM814.84 1169.9V1171.6h2.18V1169.9ZM816.96 1169.9V1170.9h2.18V1169.9ZM819.09 1169.9V1170.3h2.18V1169.9ZM821.22 1169.9V1181.0h2.18V1169.9ZM823.34 1169.9V1171.2h2.18V1169.9ZM825.47 1169.9V1172.0h2.18V1169.9ZM827.59 1169.9V1171.5h2.18V1169.9ZM829.72 1169.9V1172.9h2.18V1169.9ZM831.85 1169.9V1170.5h2.18V1169.9ZM833.97 1169.9V1173.8h2.18V1169.9ZM836.10 1169.9V1178.6h2.18V1169.9ZM838.22 1169.9V1170.4h2.18V1169.9ZM840.35 1169.9V1170.8h2.18V1169.9ZM842.48 1169.9V1170.8h2.18V1169.9ZM844.60 1169.9V1174.7h2.18V1169.9ZM846.73 1169.9V1170.4h2.18V1169.9ZM848.85 1169.9V1172.3h2.18V1169.9ZM850.98 1169.9V1170.6h2.18V1169.9ZM853.11 1169.9V1170.9h2.18V1169.9ZM855.23 1169.9V1171.3h2.18V1169.9ZM857.36 1169.9V1170.9h2.18V1169.9ZM859.48 1169.9V1170.9h2.18V1169.9ZM861.61 1169.9V1170.5h2.18V1169.9ZM863.74 1169.9V1171.9h2.18V1169.9ZM865.86 1169.9V1172.2h2.18V1169.9ZM867.99 1169.9V1171.1h2.18V1169.9ZM870.12 1169.9V1170.6h2.18V1169.9ZM872.24 1169.9V1170.8h2.18V1169.9ZM874.37 1169.9V1175.3h2.18V1169.9ZM876.49 1169.9V1171.5h2.18V1169.9ZM878.62 1169.9V1178.8h2.18V1169.9ZM880.75 1169.9V1172.7h2.18V1169.9ZM882.87 1169.9V1173.1h2.18V1169.9ZM885.00 1169.9V1173.7h2.18V1169.9ZM887.12 1169.9V1174.7h2.18V1169.9ZM889.25 1169.9V1181.4h2.18V1169.9ZM891.38 1169.9V1171.5h2.18V1169.9ZM893.50 1169.9V1171.4h2.18V1169.9ZM895.63 1169.9V1170.4h2.18V1169.9ZM897.75 1169.9V1172.2h2.18V1169.9ZM899.88 1169.9V1172.5h2.18V1169.9ZM902.01 1169.9V1173.2h2.18V1169.9ZM904.13 1169.9V1170.5h2.18V1169.9ZM906.26 1169.9V1170.9h2.18V1169.9ZM908.38 1169.9V1172.9h2.18V1169.9ZM910.51 1169.9V1170.6h2.18V1169.9ZM912.64 1169.9V1171.8h2.18V1169.9ZM914.76 1169.9V1170.5h2.18V1169.9ZM916.89 1169.9V1170.6h2.18V1169.9ZM919.01 1169.9V1172.9h2.18V1169.9ZM921.14 1169.9V1171.5h2.18V1169.9ZM923.27 1169.9V1171.0h2.18V1169.9ZM925.39 1169.9V1170.4h2.18V1169.9ZM927.52 1169.9V1172.5h2.18V1169.9ZM929.64 1169.9V1171.1h2.18V1169.9ZM931.77 1169.9V1172.8h2.18V1169.9ZM933.90 1169.9V1171.5h2.18V1169.9ZM936.02 1169.9V1170.9h2.18V1169.9ZM938.15 1169.9V1172.1h2.18V1169.9ZM940.27 1169.9V1171.6h2.18V1169.9ZM942.40 1169.9V1172.4h2.18V1169.9ZM944.53 1169.9V1172.4h2.18V1169.9ZM946.65 1169.9V1172.4h2.18V1169.9ZM948.78 1169.9V1172.3h2.18V1169.9ZM950.90 1169.9V1171.2h2.18V1169.9ZM953.03 1169.9V1170.8h2.18V1169.9ZM955.16 1169.9V1171.2h2.18V1169.9ZM957.28 1169.9V1170.9h2.18V1169.9ZM959.41 1169.9V1171.6h2.18V1169.9ZM961.53 1169.9V1171.0h2.18V1169.9ZM963.66 1169.9V1172.1h2.18V1169.9ZM965.79 1169.9V1171.2h2.18V1169.9ZM967.91 1169.9V1171.9h2.18V1169.9ZM970.04 1169.9V1171.1h2.18V1169.9ZM972.16 1169.9V1170.7h2.18V1169.9ZM974.29 1169.9V1170.4h2.18V1169.9ZM976.42 1169.9V1171.9h2.18V1169.9ZM978.54 1169.9V1170.7h2.18V1169.9ZM980.67 1169.9V1170.5h2.18V1169.9ZM982.79 1169.9V1176.4h2.18V1169.9ZM984.92 1169.9V1171.5h2.18V1169.9ZM987.05 1169.9V1172.1h2.18V1169.9ZM989.17 1169.9V1172.3h2.18V1169.9ZM991.30 1169.9V1170.4h2.18V1169.9ZM993.42 1169.9V1174.8h2.18V1169.9ZM995.55 1169.9V1170.9h2.18V1169.9ZM997.68 1169.9V1171.5h2.18V1169.9ZM999.80 1169.9V1172.7h2.18V1169.9ZM1001.93 1169.9V1173.1h2.18V1169.9ZM1004.05 1169.9V1170.7h2.18V1169.9ZM1006.18 1169.9V1170.7h2.18V1169.9ZM1008.31 1169.9V1170.9h2.18V1169.9ZM1010.43 1169.9V1172.9h2.18V1169.9ZM1012.56 1169.9V1171.9h2.18V1169.9ZM1014.68 1169.9V1170.4h2.18V1169.9ZM1016.81 1169.9V1171.1h2.18V1169.9ZM1018.94 1169.9V1172.0h2.18V1169.9ZM1021.06 1169.9V1177.5h2.18V1169.9ZM1023.19 1169.9V1172.6h2.18V1169.9ZM1025.32 1169.9V1171.8h2.18V1169.9ZM1027.44 1169.9V1172.3h2.18V1169.9ZM1029.57 1169.9V1171.2h2.18V1169.9ZM1031.69 1169.9V1170.7h2.18V1169.9ZM1033.82 1169.9V1170.4h2.18V1169.9ZM1035.95 1169.9V1173.0h2.18V1169.9ZM1038.07 1169.9V1173.2h2.18V1169.9ZM1040.20 1169.9V1171.2h2.18V1169.9ZM1042.32 1169.9V1171.6h2.18V1169.9ZM1044.45 1169.9V1180.4h2.18V1169.9ZM1046.58 1169.9V1170.4h2.18V1169.9ZM1048.70 1169.9V1171.0h2.18V1169.9ZM1050.83 1169.9V1171.3h2.18V1169.9ZM1052.95 1169.9V1170.4h2.18V1169.9ZM1055.08 1169.9V1171.0h2.18V1169.9ZM1057.21 1169.9V1173.9h2.18V1169.9ZM1059.33 1169.9V1171.3h2.18V1169.9ZM1061.46 1169.9V1171.9h2.18V1169.9ZM1063.58 1169.9V1171.1h2.18V1169.9ZM1065.71 1169.9V1171.1h2.18V1169.9ZM1067.84 1169.9V1170.4h2.18V1169.9ZM1069.96 1169.9V1171.0h2.18V1169.9ZM1072.09 1169.9V1171.9h2.18V1169.9ZM1074.21 1169.9V1172.4h2.18V1169.9ZM1076.34 1169.9V1171.7h2.18V1169.9ZM1078.47 1169.9V1172.1h2.18V1169.9ZM1080.59 1169.9V1171.1h2.18V1169.9ZM1082.72 1169.9V1171.6h2.18V1169.9ZM1084.84 1169.9V1171.3h2.18V1169.9ZM1086.97 1169.9V1172.4h2.18V1169.9ZM1089.10 1169.9V1171.6h2.18V1169.9ZM1091.22 1169.9V1171.9h2.18V1169.9ZM1093.35 1169.9V1170.5h2.18V1169.9ZM1095.47 1169.9V1170.8h2.18V1169.9ZM1097.60 1169.9V1171.9h2.18V1169.9ZM1099.73 1169.9V1174.1h2.18V1169.9ZM1101.85 1169.9V1171.6h2.18V1169.9ZM1103.98 1169.9V1173.1h2.18V1169.9ZM1106.10 1169.9V1171.1h2.18V1169.9ZM1108.23 1169.9V1170.7h2.18V1169.9ZM1110.36 1169.9V1172.6h2.18V1169.9ZM1112.48 1169.9V1170.6h2.18V1169.9ZM1114.61 1169.9V1172.3h2.18V1169.9ZM1116.73 1169.9V1171.5h2.18V1169.9ZM1118.86 1169.9V1170.9h2.18V1169.9ZM1120.99 1169.9V1181.2h2.18V1169.9ZM1123.11 1169.9V1173.3h2.18V1169.9ZM1125.24 1169.9V1170.5h2.18V1169.9ZM1127.36 1169.9V1172.3h2.18V1169.9ZM1129.49 1169.9V1170.6h2.18V1169.9ZM1131.62 1169.9V1170.4h2.18V1169.9ZM1133.74 1169.9V1171.3h2.18V1169.9ZM1135.87 1169.9V1171.6h2.18V1169.9ZM1137.99 1169.9V1171.3h2.18V1169.9ZM1140.12 1169.9V1171.9h2.18V1169.9ZM1142.25 1169.9V1180.0h2.18V1169.9ZM1144.37 1169.9V1171.5h2.18V1169.9ZM1146.50 1169.9V1170.6h2.18V1169.9ZM1148.62 1169.9V1172.1h2.18V1169.9ZM1150.75 1169.9V1170.5h2.18V1169.9ZM1152.88 1169.9V1171.3h2.18V1169.9ZM1155.00 1169.9V1170.5h2.18V1169.9ZM1157.13 1169.9V1171.3h2.18V1169.9ZM1159.25 1169.9V1172.1h2.18V1169.9ZM1161.38 1169.9V1173.4h2.18V1169.9ZM1163.51 1169.9V1172.4h2.18V1169.9ZM1165.63 1169.9V1261.9h2.18V1169.9ZM1167.76 1169.9V1170.4h2.18V1169.9ZM1169.88 1169.9V1171.7h2.18V1169.9ZM1172.01 1169.9V1171.3h2.18V1169.9ZM1174.14 1169.9V1170.4h2.18V1169.9ZM1176.26 1169.9V1175.4h2.18V1169.9ZM1178.39 1169.9V1172.0h2.18V1169.9ZM1180.52 1169.9V1171.3h2.18V1169.9ZM1182.64 1169.9V1171.4h2.18V1169.9ZM1184.77 1169.9V1170.8h2.18V1169.9ZM1186.89 1169.9V1171.8h2.18V1169.9ZM1189.02 1169.9V1170.7h2.18V1169.9ZM1191.15 1169.9V1171.5h2.18V1169.9ZM1193.27 1169.9V1171.2h2.18V1169.9ZM1195.40 1169.9V1170.5h2.18V1169.9ZM1197.52 1169.9V1171.6h2.18V1169.9ZM1199.65 1169.9V1173.6h2.18V1169.9ZM1201.78 1169.9V1173.0h2.18V1169.9ZM1203.90 1169.9V1176.5h2.18V1169.9ZM1206.03 1169.9V1171.9h2.18V1169.9ZM1208.15 1169.9V1172.1h2.18V1169.9ZM1210.28 1169.9V1171.5h2.18V1169.9ZM1212.41 1169.9V1171.8h2.18V1169.9ZM1214.53 1169.9V1171.1h2.18V1169.9ZM1216.66 1169.9V1170.7h2.18V1169.9ZM1218.78 1169.9V1171.1h2.18V1169.9ZM1220.91 1169.9V1170.5h2.18V1169.9ZM1223.04 1169.9V1171.3h2.18V1169.9ZM1225.16 1169.9V1171.4h2.18V1169.9ZM1227.29 1169.9V1171.2h2.18V1169.9ZM1229.41 1169.9V1172.1h2.18V1169.9ZM1231.54 1169.9V1170.4h2.18V1169.9ZM1233.67 1169.9V1180.3h2.18V1169.9ZM1235.79 1169.9V1172.0h2.18V1169.9ZM1237.92 1169.9V1171.7h2.18V1169.9ZM1240.04 1169.9V1171.6h2.18V1169.9ZM1242.17 1169.9V1170.6h2.18V1169.9ZM1244.30 1169.9V1172.0h2.18V1169.9ZM1246.42 1169.9V1170.9h2.18V1169.9ZM1248.55 1169.9V1170.6h2.18V1169.9ZM1250.67 1169.9V1170.9h2.18V1169.9ZM1252.80 1169.9V1172.2h2.18V1169.9ZM1254.93 1169.9V1174.0h2.18V1169.9ZM1257.05 1169.9V1171.1h2.18V1169.9ZM1259.18 1169.9V1171.9h2.18V1169.9ZM1261.30 1169.9V1171.0h2.18V1169.9ZM1263.43 1169.9V1172.8h2.18V1169.9ZM1265.56 1169.9V1170.3h2.18V1169.9ZM1267.68 1169.9V1171.4h2.18V1169.9ZM1269.81 1169.9V1171.0h2.18V1169.9ZM1271.93 1169.9V1172.9h2.18V1169.9ZM1274.06 1169.9V1171.0h2.18V1169.9ZM1276.19 1169.9V1171.9h2.18V1169.9ZM1278.31 1169.9V1172.4h2.18V1169.9ZM1280.44 1169.9V1171.6h2.18V1169.9ZM1282.56 1169.9V1171.3h2.18V1169.9ZM1284.69 1169.9V1170.4h2.18V1169.9ZM1286.82 1169.9V1173.3h2.18V1169.9ZM1288.94 1169.9V1176.5h2.18V1169.9ZM1291.07 1169.9V1170.4h2.18V1169.9ZM1293.19 1169.9V1172.3h2.18V1169.9ZM1295.32 1169.9V1170.7h2.18V1169.9ZM1297.45 1169.9V1171.6h2.18V1169.9ZM1299.57 1169.9V1172.7h2.18V1169.9ZM1301.70 1169.9V1171.5h2.18V1169.9ZM1303.82 1169.9V1172.3h2.18V1169.9ZM1305.95 1169.9V1172.2h2.18V1169.9ZM1308.08 1169.9V1171.2h2.18V1169.9ZM1310.20 1169.9V1172.7h2.18V1169.9ZM1312.33 1169.9V1172.3h2.18V1169.9ZM1314.45 1169.9V1173.3h2.18V1169.9ZM1316.58 1169.9V1171.7h2.18V1169.9ZM1318.71 1169.9V1172.4h2.18V1169.9ZM1320.83 1169.9V1181.3h2.18V1169.9ZM1322.96 1169.9V1172.1h2.18V1169.9ZM1325.08 1169.9V1170.8h2.18V1169.9ZM1327.21 1169.9V1171.8h2.18V1169.9ZM1329.34 1169.9V1171.2h2.18V1169.9ZM1331.46 1169.9V1170.9h2.18V1169.9ZM1333.59 1169.9V1171.6h2.18V1169.9ZM1335.72 1169.9V1171.1h2.18V1169.9ZM1337.84 1169.9V1170.8h2.18V1169.9ZM1339.97 1169.9V1170.4h2.18V1169.9ZM1342.09 1169.9V1171.7h2.18V1169.9ZM1344.22 1169.9V1172.3h2.18V1169.9ZM1346.35 1169.9V1172.1h2.18V1169.9ZM1348.47 1169.9V1174.1h2.18V1169.9ZM1350.60 1169.9V1171.3h2.18V1169.9ZM1352.72 1169.9V1171.7h2.18V1169.9ZM1354.85 1169.9V1171.1h2.18V1169.9ZM1356.98 1169.9V1170.5h2.18V1169.9ZM1359.10 1169.9V1171.5h2.18V1169.9ZM1361.23 1169.9V1172.1h2.18V1169.9ZM1363.35 1169.9V1177.8h2.18V1169.9ZM1365.48 1169.9V1172.2h2.18V1169.9ZM1367.61 1169.9V1173.7h2.18V1169.9ZM1369.73 1169.9V1170.5h2.18V1169.9ZM1371.86 1169.9V1171.7h2.18V1169.9ZM1373.98 1169.9V1171.8h2.18V1169.9ZM1376.11 1169.9V1177.3h2.18V1169.9ZM1378.24 1169.9V1171.2h2.18V1169.9ZM1380.36 1169.9V1172.4h2.18V1169.9ZM1382.49 1169.9V1170.5h2.18V1169.9ZM1384.61 1169.9V1171.7h2.18V1169.9ZM1386.74 1169.9V1170.8h2.18V1169.9ZM1388.87 1169.9V1171.3h2.18V1169.9ZM1390.99 1169.9V1172.2h2.18V1169.9ZM1393.12 1169.9V1170.7h2.18V1169.9ZM1395.24 1169.9V1171.7h2.18V1169.9ZM1397.37 1169.9V1172.0h2.18V1169.9ZM1399.50 1169.9V1171.3h2.18V1169.9ZM1401.62 1169.9V1170.5h2.18V1169.9ZM1403.75 1169.9V1171.4h2.18V1169.9ZM1405.87 1169.9V1172.5h2.18V1169.9Z"/>
<text class="ax" x="632" y="1301" text-anchor="middle" style="fill:#5b5b5b;font-size:19.5px">Jan 4</text>
<text class="ax" x="750" y="1301" text-anchor="middle" style="fill:#5b5b5b;font-size:19.5px">Feb 28</text>
<text class="ax" x="873" y="1301" text-anchor="middle" style="fill:#5b5b5b;font-size:19.5px">Apr 26</text>
<text class="ax" x="997" y="1301" text-anchor="middle" style="fill:#5b5b5b;font-size:19.5px">Jun 23</text>
<text class="ax" x="1121" y="1301" text-anchor="middle" style="fill:#5b5b5b;font-size:19.5px">Aug 20</text>
<text class="ax" x="1244" y="1301" text-anchor="middle" style="fill:#5b5b5b;font-size:19.5px">Oct 17</text>
<text class="ax" x="1366" y="1301" text-anchor="middle" style="fill:#5b5b5b;font-size:19.5px">Dec 13</text>
<text class="ax" x="1548" y="1268.0" text-anchor="end">0</text>
<rect x="1562" y="1195.5" width="776" height="1.2" fill="#e3e3e3"/>
<text class="ax" x="1548" y="1203.0" text-anchor="end">5</text>
<rect x="1562" y="1130.5" width="776" height="1.2" fill="#e3e3e3"/>
<text class="ax" x="1548" y="1138.0" text-anchor="end">10</text>
<rect x="1562" y="1065.5" width="776" height="1.2" fill="#e3e3e3"/>
<text class="ax" x="1548" y="1079.0" text-anchor="end">15</text>
<path fill="#b5d6f7" d="M1562.30 1261V1183.0h1.23V1261ZM1564.43 1261V1196.0h1.23V1261ZM1566.56 1261V1170.0h1.23V1261ZM1568.69 1261V1183.0h1.23V1261ZM1570.82 1261V1209.0h1.23V1261ZM1572.95 1261V1183.0h1.23V1261ZM1575.08 1261V1196.0h1.23V1261ZM1577.21 1261V1196.0h1.23V1261ZM1579.34 1261V1144.0h1.23V1261ZM1581.47 1261V1196.0h1.23V1261ZM1583.60 1261V1170.0h1.23V1261ZM1585.73 1261V1209.0h1.23V1261ZM1587.86 1261V1157.0h1.23V1261ZM1589.99 1261V1118.0h1.23V1261ZM1592.12 1261V1196.0h1.23V1261ZM1594.25 1261V1209.0h1.23V1261ZM1596.38 1261V1209.0h1.23V1261ZM1598.51 1261V1196.0h1.23V1261ZM1600.64 1261V1222.0h1.23V1261ZM1602.77 1261V1118.0h1.23V1261ZM1604.90 1261V1183.0h1.23V1261ZM1607.03 1261V1157.0h1.23V1261ZM1609.16 1261V1183.0h1.23V1261ZM1611.29 1261V1196.0h1.23V1261ZM1613.42 1261V1131.0h1.23V1261ZM1615.55 1261V1157.0h1.23V1261ZM1617.68 1261V1222.0h1.23V1261ZM1619.81 1261V1170.0h1.23V1261ZM1621.94 1261V1183.0h1.23V1261ZM1624.07 1261V1196.0h1.23V1261ZM1628.33 1261V1144.0h1.23V1261ZM1630.46 1261V1209.0h1.23V1261ZM1632.59 1261V1183.0h1.23V1261ZM1634.72 1261V1222.0h1.23V1261ZM1636.85 1261V1183.0h1.23V1261ZM1638.98 1261V1196.0h1.23V1261ZM1641.11 1261V1183.0h1.23V1261ZM1643.24 1261V1209.0h1.23V1261ZM1645.37 1261V1183.0h1.23V1261ZM1647.50 1261V1209.0h1.23V1261ZM1649.63 1261V1222.0h1.23V1261ZM1651.76 1261V1157.0h1.23V1261ZM1653.89 1261V1183.0h1.23V1261ZM1656.02 1261V1222.0h1.23V1261ZM1658.15 1261V1222.0h1.23V1261ZM1660.28 1261V1222.0h1.23V1261ZM1662.41 1261V1144.0h1.23V1261ZM1664.54 1261V1131.0h1.23V1261ZM1666.67 1261V1183.0h1.23V1261ZM1668.80 1261V1196.0h1.23V1261ZM1670.93 1261V1222.0h1.23V1261ZM1673.06 1261V1235.0h1.23V1261ZM1675.19 1261V1183.0h1.23V1261ZM1677.32 1261V1209.0h1.23V1261ZM1679.45 1261V1183.0h1.23V1261ZM1681.58 1261V1105.0h1.23V1261ZM1683.71 1261V1170.0h1.23V1261ZM1685.84 1261V1183.0h1.23V1261ZM1687.97 1261V1183.0h1.23V1261ZM1690.10 1261V1170.0h1.23V1261ZM1692.23 1261V1196.0h1.23V1261ZM1694.36 1261V1144.0h1.23V1261ZM1696.49 1261V1209.0h1.23V1261ZM1698.62 1261V1157.0h1.23V1261ZM1700.75 1261V1222.0h1.23V1261ZM1702.88 1261V1170.0h1.23V1261ZM1705.01 1261V1170.0h1.23V1261ZM1707.14 1261V1157.0h1.23V1261ZM1709.27 1261V1157.0h1.23V1261ZM1711.40 1261V1183.0h1.23V1261ZM1713.53 1261V1196.0h1.23V1261ZM1715.66 1261V1183.0h1.23V1261ZM1717.79 1261V1209.0h1.23V1261ZM1719.92 1261V1196.0h1.23V1261ZM1722.05 1261V1209.0h1.23V1261ZM1724.18 1261V1144.0h1.23V1261ZM1726.31 1261V1105.0h1.23V1261ZM1728.44 1261V1131.0h1.23V1261ZM1730.57 1261V1092.0h1.23V1261ZM1732.70 1261V1170.0h1.23V1261ZM1734.83 1261V1157.0h1.23V1261ZM1736.96 1261V1131.0h1.23V1261ZM1739.09 1261V1144.0h1.23V1261ZM1741.22 1261V1170.0h1.23V1261ZM1743.35 1261V1222.0h1.23V1261ZM1745.48 1261V1222.0h1.23V1261ZM1747.61 1261V1196.0h1.23V1261ZM1749.74 1261V1170.0h1.23V1261ZM1751.87 1261V1222.0h1.23V1261ZM1754.00 1261V1196.0h1.23V1261ZM1756.13 1261V1144.0h1.23V1261ZM1758.26 1261V1131.0h1.23V1261ZM1760.39 1261V1157.0h1.23V1261ZM1762.52 1261V1235.0h1.23V1261ZM1764.65 1261V1144.0h1.23V1261ZM1766.78 1261V1131.0h1.23V1261ZM1768.91 1261V1170.0h1.23V1261ZM1771.04 1261V1157.0h1.23V1261ZM1773.17 1261V1157.0h1.23V1261ZM1775.30 1261V1170.0h1.23V1261ZM1777.43 1261V1196.0h1.23V1261ZM1779.56 1261V1196.0h1.23V1261ZM1781.69 1261V1222.0h1.23V1261ZM1783.82 1261V1183.0h1.23V1261ZM1785.95 1261V1118.0h1.23V1261ZM1788.08 1261V1222.0h1.23V1261ZM1790.21 1261V1183.0h1.23V1261ZM1792.34 1261V1196.0h1.23V1261ZM1794.47 1261V1183.0h1.23V1261ZM1796.60 1261V1144.0h1.23V1261ZM1798.73 1261V1079.0h1.23V1261ZM1800.86 1261V1144.0h1.23V1261ZM1802.99 1261V1183.0h1.23V1261ZM1805.12 1261V1183.0h1.23V1261ZM1807.25 1261V1183.0h1.23V1261ZM1809.38 1261V1222.0h1.23V1261ZM1811.51 1261V1157.0h1.23V1261ZM1813.64 1261V1183.0h1.23V1261ZM1815.77 1261V1092.0h1.23V1261ZM1817.90 1261V1170.0h1.23V1261ZM1820.03 1261V1170.0h1.23V1261ZM1822.16 1261V1170.0h1.23V1261ZM1824.29 1261V1196.0h1.23V1261ZM1826.42 1261V1131.0h1.23V1261ZM1828.55 1261V1196.0h1.23V1261ZM1830.68 1261V1170.0h1.23V1261ZM1832.81 1261V1157.0h1.23V1261ZM1834.94 1261V1170.0h1.23V1261ZM1837.07 1261V1235.0h1.23V1261ZM1839.20 1261V1144.0h1.23V1261ZM1841.33 1261V1170.0h1.23V1261ZM1843.46 1261V1144.0h1.23V1261ZM1845.59 1261V1105.0h1.23V1261ZM1847.72 1261V1066.0h1.23V1261ZM1849.85 1261V1196.0h1.23V1261ZM1851.98 1261V1209.0h1.23V1261ZM1854.11 1261V1144.0h1.23V1261ZM1856.24 1261V1157.0h1.23V1261ZM1858.37 1261V1144.0h1.23V1261ZM1860.50 1261V1209.0h1.23V1261ZM1862.63 1261V1157.0h1.23V1261ZM1864.76 1261V1209.0h1.23V1261ZM1866.89 1261V1170.0h1.23V1261ZM1869.02 1261V1183.0h1.23V1261ZM1871.15 1261V1131.0h1.23V1261ZM1873.28 1261V1183.0h1.23V1261ZM1875.41 1261V1131.0h1.23V1261ZM1877.54 1261V1170.0h1.23V1261ZM1879.67 1261V1144.0h1.23V1261ZM1881.80 1261V1157.0h1.23V1261ZM1883.93 1261V1183.0h1.23V1261ZM1886.06 1261V1183.0h1.23V1261ZM1888.19 1261V1079.0h1.23V1261ZM1890.32 1261V1170.0h1.23V1261ZM1892.45 1261V1196.0h1.23V1261ZM1894.58 1261V1170.0h1.23V1261ZM1896.71 1261V1196.0h1.23V1261ZM1898.84 1261V1183.0h1.23V1261ZM1900.97 1261V1235.0h1.23V1261ZM1903.10 1261V1209.0h1.23V1261ZM1905.23 1261V1170.0h1.23V1261ZM1907.36 1261V1196.0h1.23V1261ZM1909.49 1261V1183.0h1.23V1261ZM1911.62 1261V1170.0h1.23V1261ZM1913.75 1261V1248.0h1.23V1261ZM1915.88 1261V1196.0h1.23V1261ZM1918.01 1261V1170.0h1.23V1261ZM1920.14 1261V1144.0h1.23V1261ZM1922.27 1261V1222.0h1.23V1261ZM1924.40 1261V1222.0h1.23V1261ZM1926.53 1261V1170.0h1.23V1261ZM1928.66 1261V1209.0h1.23V1261ZM1930.79 1261V1144.0h1.23V1261ZM1932.92 1261V1235.0h1.23V1261ZM1935.05 1261V1196.0h1.23V1261ZM1937.18 1261V1196.0h1.23V1261ZM1939.31 1261V1183.0h1.23V1261ZM1941.44 1261V1196.0h1.23V1261ZM1943.57 1261V1222.0h1.23V1261ZM1945.70 1261V1209.0h1.23V1261ZM1947.83 1261V1235.0h1.23V1261ZM1949.96 1261V1170.0h1.23V1261ZM1952.09 1261V1209.0h1.23V1261ZM1954.22 1261V1170.0h1.23V1261ZM1956.35 1261V1222.0h1.23V1261ZM1958.48 1261V1196.0h1.23V1261ZM1960.61 1261V1196.0h1.23V1261ZM1962.74 1261V1196.0h1.23V1261ZM1964.87 1261V1170.0h1.23V1261ZM1967.00 1261V1157.0h1.23V1261ZM1969.13 1261V1248.0h1.23V1261ZM1971.26 1261V1209.0h1.23V1261ZM1973.39 1261V1222.0h1.23V1261ZM1975.52 1261V1248.0h1.23V1261ZM1977.65 1261V1209.0h1.23V1261ZM1979.78 1261V1183.0h1.23V1261ZM1981.91 1261V1248.0h1.23V1261ZM1984.04 1261V1222.0h1.23V1261ZM1986.17 1261V1222.0h1.23V1261ZM1988.30 1261V1235.0h1.23V1261ZM1990.43 1261V1209.0h1.23V1261ZM1992.56 1261V1209.0h1.23V1261ZM1994.69 1261V1222.0h1.23V1261ZM1996.82 1261V1222.0h1.23V1261ZM1998.95 1261V1170.0h1.23V1261ZM2001.08 1261V1235.0h1.23V1261ZM2003.21 1261V1196.0h1.23V1261ZM2005.34 1261V1235.0h1.23V1261ZM2007.47 1261V1235.0h1.23V1261ZM2009.60 1261V1183.0h1.23V1261ZM2011.73 1261V1209.0h1.23V1261ZM2013.86 1261V1144.0h1.23V1261ZM2015.99 1261V1196.0h1.23V1261ZM2018.12 1261V1222.0h1.23V1261ZM2020.25 1261V1209.0h1.23V1261ZM2022.38 1261V1222.0h1.23V1261ZM2024.51 1261V1196.0h1.23V1261ZM2026.64 1261V1209.0h1.23V1261ZM2028.77 1261V1209.0h1.23V1261ZM2030.90 1261V1222.0h1.23V1261ZM2033.03 1261V1248.0h1.23V1261ZM2035.16 1261V1248.0h1.23V1261ZM2037.29 1261V1248.0h1.23V1261ZM2039.42 1261V1196.0h1.23V1261ZM2041.55 1261V1222.0h1.23V1261ZM2043.68 1261V1235.0h1.23V1261ZM2045.81 1261V1196.0h1.23V1261ZM2047.94 1261V1222.0h1.23V1261ZM2050.07 1261V1196.0h1.23V1261ZM2052.20 1261V1183.0h1.23V1261ZM2054.33 1261V1222.0h1.23V1261ZM2056.46 1261V1170.0h1.23V1261ZM2058.59 1261V1196.0h1.23V1261ZM2060.72 1261V1235.0h1.23V1261ZM2062.85 1261V1209.0h1.23V1261ZM2064.98 1261V1196.0h1.23V1261ZM2067.11 1261V1222.0h1.23V1261ZM2069.24 1261V1131.0h1.23V1261ZM2071.37 1261V1235.0h1.23V1261ZM2073.50 1261V1222.0h1.23V1261ZM2075.63 1261V1196.0h1.23V1261ZM2077.76 1261V1157.0h1.23V1261ZM2079.89 1261V1196.0h1.23V1261ZM2082.02 1261V1170.0h1.23V1261ZM2084.15 1261V1209.0h1.23V1261ZM2086.28 1261V1183.0h1.23V1261ZM2088.41 1261V1235.0h1.23V1261ZM2090.54 1261V1209.0h1.23V1261ZM2092.67 1261V1209.0h1.23V1261ZM2094.80 1261V1170.0h1.23V1261ZM2096.93 1261V1183.0h1.23V1261ZM2099.06 1261V1196.0h1.23V1261ZM2101.19 1261V1170.0h1.23V1261ZM2103.32 1261V1209.0h1.23V1261ZM2105.45 1261V1209.0h1.23V1261ZM2107.58 1261V1209.0h1.23V1261ZM2109.71 1261V1170.0h1.23V1261ZM2111.84 1261V1196.0h1.23V1261ZM2113.97 1261V1183.0h1.23V1261ZM2116.10 1261V1157.0h1.23V1261ZM2118.23 1261V1209.0h1.23V1261ZM2120.36 1261V1222.0h1.23V1261ZM2122.49 1261V1222.0h1.23V1261ZM2124.62 1261V1209.0h1.23V1261ZM2126.75 1261V1170.0h1.23V1261ZM2128.88 1261V1170.0h1.23V1261ZM2131.01 1261V1196.0h1.23V1261ZM2133.14 1261V1209.0h1.23V1261ZM2135.27 1261V1196.0h1.23V1261ZM2137.40 1261V1196.0h1.23V1261ZM2139.53 1261V1144.0h1.23V1261ZM2141.66 1261V1209.0h1.23V1261ZM2143.79 1261V1157.0h1.23V1261ZM2145.92 1261V1209.0h1.23V1261ZM2148.05 1261V1235.0h1.23V1261ZM2150.18 1261V1170.0h1.23V1261ZM2152.31 1261V1157.0h1.23V1261ZM2154.44 1261V1209.0h1.23V1261ZM2156.57 1261V1222.0h1.23V1261ZM2158.70 1261V1235.0h1.23V1261ZM2160.83 1261V1222.0h1.23V1261ZM2162.96 1261V1157.0h1.23V1261ZM2165.09 1261V1196.0h1.23V1261ZM2167.22 1261V1183.0h1.23V1261ZM2169.35 1261V1209.0h1.23V1261ZM2171.48 1261V1209.0h1.23V1261ZM2173.61 1261V1235.0h1.23V1261ZM2175.74 1261V1170.0h1.23V1261ZM2177.87 1261V1170.0h1.23V1261ZM2180.00 1261V1157.0h1.23V1261ZM2182.13 1261V1170.0h1.23V1261ZM2184.26 1261V1196.0h1.23V1261ZM2186.39 1261V1209.0h1.23V1261ZM2188.52 1261V1131.0h1.23V1261ZM2190.65 1261V1183.0h1.23V1261ZM2192.78 1261V1183.0h1.23V1261ZM2194.91 1261V1196.0h1.23V1261ZM2197.04 1261V1196.0h1.23V1261ZM2199.17 1261V1196.0h1.23V1261ZM2201.30 1261V1170.0h1.23V1261ZM2203.43 1261V1209.0h1.23V1261ZM2205.56 1261V1222.0h1.23V1261ZM2207.69 1261V1196.0h1.23V1261ZM2209.82 1261V1209.0h1.23V1261ZM2211.95 1261V1131.0h1.23V1261ZM2214.08 1261V1222.0h1.23V1261ZM2216.21 1261V1183.0h1.23V1261ZM2218.34 1261V1170.0h1.23V1261ZM2220.47 1261V1196.0h1.23V1261ZM2222.60 1261V1196.0h1.23V1261ZM2224.73 1261V1196.0h1.23V1261ZM2226.86 1261V1209.0h1.23V1261ZM2228.99 1261V1196.0h1.23V1261ZM2231.12 1261V1209.0h1.23V1261ZM2233.25 1261V1222.0h1.23V1261ZM2235.38 1261V1209.0h1.23V1261ZM2237.51 1261V1222.0h1.23V1261ZM2239.64 1261V1196.0h1.23V1261ZM2241.77 1261V1170.0h1.23V1261ZM2243.90 1261V1222.0h1.23V1261ZM2246.03 1261V1196.0h1.23V1261ZM2248.16 1261V1183.0h1.23V1261ZM2250.29 1261V1170.0h1.23V1261ZM2252.42 1261V1222.0h1.23V1261ZM2254.55 1261V1248.0h1.23V1261ZM2256.68 1261V1209.0h1.23V1261ZM2258.81 1261V1209.0h1.23V1261ZM2260.94 1261V1222.0h1.23V1261ZM2263.07 1261V1196.0h1.23V1261ZM2265.20 1261V1248.0h1.23V1261ZM2267.33 1261V1222.0h1.23V1261ZM2269.46 1261V1235.0h1.23V1261ZM2271.59 1261V1183.0h1.23V1261ZM2273.72 1261V1157.0h1.23V1261ZM2275.85 1261V1196.0h1.23V1261ZM2277.98 1261V1196.0h1.23V1261ZM2280.11 1261V1196.0h1.23V1261ZM2282.24 1261V1222.0h1.23V1261ZM2284.37 1261V1183.0h1.23V1261ZM2286.50 1261V1209.0h1.23V1261ZM2288.63 1261V1235.0h1.23V1261ZM2290.76 1261V1170.0h1.23V1261ZM2292.89 1261V1209.0h1.23V1261ZM2295.02 1261V1183.0h1.23V1261ZM2297.15 1261V1222.0h1.23V1261ZM2299.28 1261V1235.0h1.23V1261ZM2301.41 1261V1209.0h1.23V1261ZM2303.54 1261V1209.0h1.23V1261ZM2305.67 1261V1248.0h1.23V1261ZM2307.80 1261V1196.0h1.23V1261ZM2309.93 1261V1235.0h1.23V1261ZM2312.06 1261V1248.0h1.23V1261ZM2314.19 1261V1235.0h1.23V1261ZM2316.32 1261V1235.0h1.23V1261ZM2318.45 1261V1222.0h1.23V1261ZM2322.71 1261V1222.0h1.23V1261ZM2324.84 1261V1209.0h1.23V1261ZM2326.97 1261V1222.0h1.23V1261ZM2329.10 1261V1209.0h1.23V1261ZM2331.23 1261V1235.0h1.23V1261ZM2333.36 1261V1248.0h1.23V1261ZM2335.49 1261V1222.0h1.23V1261Z"/>
<path fill="#78a9e0" d="M1562.30 1261V1183.0h0.9V1261ZM1564.43 1261V1196.0h0.9V1261ZM1566.56 1261V1170.0h0.9V1261ZM1568.69 1261V1183.0h0.9V1261ZM1570.82 1261V1209.0h0.9V1261ZM1572.95 1261V1183.0h0.9V1261ZM1575.08 1261V1196.0h0.9V1261ZM1577.21 1261V1196.0h0.9V1261ZM1579.34 1261V1144.0h0.9V1261ZM1581.47 1261V1196.0h0.9V1261ZM1583.60 1261V1170.0h0.9V1261ZM1585.73 1261V1209.0h0.9V1261ZM1587.86 1261V1157.0h0.9V1261ZM1589.99 1261V1118.0h0.9V1261ZM1592.12 1261V1196.0h0.9V1261ZM1594.25 1261V1209.0h0.9V1261ZM1596.38 1261V1209.0h0.9V1261ZM1598.51 1261V1196.0h0.9V1261ZM1600.64 1261V1222.0h0.9V1261ZM1602.77 1261V1118.0h0.9V1261ZM1604.90 1261V1183.0h0.9V1261ZM1607.03 1261V1157.0h0.9V1261ZM1609.16 1261V1183.0h0.9V1261ZM1611.29 1261V1196.0h0.9V1261ZM1613.42 1261V1131.0h0.9V1261ZM1615.55 1261V1157.0h0.9V1261ZM1617.68 1261V1222.0h0.9V1261ZM1619.81 1261V1170.0h0.9V1261ZM1621.94 1261V1183.0h0.9V1261ZM1624.07 1261V1196.0h0.9V1261ZM1628.33 1261V1144.0h0.9V1261ZM1630.46 1261V1209.0h0.9V1261ZM1632.59 1261V1183.0h0.9V1261ZM1634.72 1261V1222.0h0.9V1261ZM1636.85 1261V1183.0h0.9V1261ZM1638.98 1261V1196.0h0.9V1261ZM1641.11 1261V1183.0h0.9V1261ZM1643.24 1261V1209.0h0.9V1261ZM1645.37 1261V1183.0h0.9V1261ZM1647.50 1261V1209.0h0.9V1261ZM1649.63 1261V1222.0h0.9V1261ZM1651.76 1261V1157.0h0.9V1261ZM1653.89 1261V1183.0h0.9V1261ZM1656.02 1261V1222.0h0.9V1261ZM1658.15 1261V1222.0h0.9V1261ZM1660.28 1261V1222.0h0.9V1261ZM1662.41 1261V1144.0h0.9V1261ZM1664.54 1261V1131.0h0.9V1261ZM1666.67 1261V1183.0h0.9V1261ZM1668.80 1261V1196.0h0.9V1261ZM1670.93 1261V1222.0h0.9V1261ZM1673.06 1261V1235.0h0.9V1261ZM1675.19 1261V1183.0h0.9V1261ZM1677.32 1261V1209.0h0.9V1261ZM1679.45 1261V1183.0h0.9V1261ZM1681.58 1261V1105.0h0.9V1261ZM1683.71 1261V1170.0h0.9V1261ZM1685.84 1261V1183.0h0.9V1261ZM1687.97 1261V1183.0h0.9V1261ZM1690.10 1261V1170.0h0.9V1261ZM1692.23 1261V1196.0h0.9V1261ZM1694.36 1261V1144.0h0.9V1261ZM1696.49 1261V1209.0h0.9V1261ZM1698.62 1261V1157.0h0.9V1261ZM1700.75 1261V1222.0h0.9V1261ZM1702.88 1261V1170.0h0.9V1261ZM1705.01 1261V1170.0h0.9V1261ZM1707.14 1261V1157.0h0.9V1261ZM1709.27 1261V1157.0h0.9V1261ZM1711.40 1261V1183.0h0.9V1261ZM1713.53 1261V1196.0h0.9V1261ZM1715.66 1261V1183.0h0.9V1261ZM1717.79 1261V1209.0h0.9V1261ZM1719.92 1261V1196.0h0.9V1261ZM1722.05 1261V1209.0h0.9V1261ZM1724.18 1261V1144.0h0.9V1261ZM1726.31 1261V1105.0h0.9V1261ZM1728.44 1261V1131.0h0.9V1261ZM1730.57 1261V1092.0h0.9V1261ZM1732.70 1261V1170.0h0.9V1261ZM1734.83 1261V1157.0h0.9V1261ZM1736.96 1261V1131.0h0.9V1261ZM1739.09 1261V1144.0h0.9V1261ZM1741.22 1261V1170.0h0.9V1261ZM1743.35 1261V1222.0h0.9V1261ZM1745.48 1261V1222.0h0.9V1261ZM1747.61 1261V1196.0h0.9V1261ZM1749.74 1261V1170.0h0.9V1261ZM1751.87 1261V1222.0h0.9V1261ZM1754.00 1261V1196.0h0.9V1261ZM1756.13 1261V1144.0h0.9V1261ZM1758.26 1261V1131.0h0.9V1261ZM1760.39 1261V1157.0h0.9V1261ZM1762.52 1261V1235.0h0.9V1261ZM1764.65 1261V1144.0h0.9V1261ZM1766.78 1261V1131.0h0.9V1261ZM1768.91 1261V1170.0h0.9V1261ZM1771.04 1261V1157.0h0.9V1261ZM1773.17 1261V1157.0h0.9V1261ZM1775.30 1261V1170.0h0.9V1261ZM1777.43 1261V1196.0h0.9V1261ZM1779.56 1261V1196.0h0.9V1261ZM1781.69 1261V1222.0h0.9V1261ZM1783.82 1261V1183.0h0.9V1261ZM1785.95 1261V1118.0h0.9V1261ZM1788.08 1261V1222.0h0.9V1261ZM1790.21 1261V1183.0h0.9V1261ZM1792.34 1261V1196.0h0.9V1261ZM1794.47 1261V1183.0h0.9V1261ZM1796.60 1261V1144.0h0.9V1261ZM1798.73 1261V1079.0h0.9V1261ZM1800.86 1261V1144.0h0.9V1261ZM1802.99 1261V1183.0h0.9V1261ZM1805.12 1261V1183.0h0.9V1261ZM1807.25 1261V1183.0h0.9V1261ZM1809.38 1261V1222.0h0.9V1261ZM1811.51 1261V1157.0h0.9V1261ZM1813.64 1261V1183.0h0.9V1261ZM1815.77 1261V1092.0h0.9V1261ZM1817.90 1261V1170.0h0.9V1261ZM1820.03 1261V1170.0h0.9V1261ZM1822.16 1261V1170.0h0.9V1261ZM1824.29 1261V1196.0h0.9V1261ZM1826.42 1261V1131.0h0.9V1261ZM1828.55 1261V1196.0h0.9V1261ZM1830.68 1261V1170.0h0.9V1261ZM1832.81 1261V1157.0h0.9V1261ZM1834.94 1261V1170.0h0.9V1261ZM1837.07 1261V1235.0h0.9V1261ZM1839.20 1261V1144.0h0.9V1261ZM1841.33 1261V1170.0h0.9V1261ZM1843.46 1261V1144.0h0.9V1261ZM1845.59 1261V1105.0h0.9V1261ZM1847.72 1261V1066.0h0.9V1261ZM1849.85 1261V1196.0h0.9V1261ZM1851.98 1261V1209.0h0.9V1261ZM1854.11 1261V1144.0h0.9V1261ZM1856.24 1261V1157.0h0.9V1261ZM1858.37 1261V1144.0h0.9V1261ZM1860.50 1261V1209.0h0.9V1261ZM1862.63 1261V1157.0h0.9V1261ZM1864.76 1261V1209.0h0.9V1261ZM1866.89 1261V1170.0h0.9V1261ZM1869.02 1261V1183.0h0.9V1261ZM1871.15 1261V1131.0h0.9V1261ZM1873.28 1261V1183.0h0.9V1261ZM1875.41 1261V1131.0h0.9V1261ZM1877.54 1261V1170.0h0.9V1261ZM1879.67 1261V1144.0h0.9V1261ZM1881.80 1261V1157.0h0.9V1261ZM1883.93 1261V1183.0h0.9V1261ZM1886.06 1261V1183.0h0.9V1261ZM1888.19 1261V1079.0h0.9V1261ZM1890.32 1261V1170.0h0.9V1261ZM1892.45 1261V1196.0h0.9V1261ZM1894.58 1261V1170.0h0.9V1261ZM1896.71 1261V1196.0h0.9V1261ZM1898.84 1261V1183.0h0.9V1261ZM1900.97 1261V1235.0h0.9V1261ZM1903.10 1261V1209.0h0.9V1261ZM1905.23 1261V1170.0h0.9V1261ZM1907.36 1261V1196.0h0.9V1261ZM1909.49 1261V1183.0h0.9V1261ZM1911.62 1261V1170.0h0.9V1261ZM1913.75 1261V1248.0h0.9V1261ZM1915.88 1261V1196.0h0.9V1261ZM1918.01 1261V1170.0h0.9V1261ZM1920.14 1261V1144.0h0.9V1261ZM1922.27 1261V1222.0h0.9V1261ZM1924.40 1261V1222.0h0.9V1261ZM1926.53 1261V1170.0h0.9V1261ZM1928.66 1261V1209.0h0.9V1261ZM1930.79 1261V1144.0h0.9V1261ZM1932.92 1261V1235.0h0.9V1261ZM1935.05 1261V1196.0h0.9V1261ZM1937.18 1261V1196.0h0.9V1261ZM1939.31 1261V1183.0h0.9V1261ZM1941.44 1261V1196.0h0.9V1261ZM1943.57 1261V1222.0h0.9V1261ZM1945.70 1261V1209.0h0.9V1261ZM1947.83 1261V1235.0h0.9V1261ZM1949.96 1261V1170.0h0.9V1261ZM1952.09 1261V1209.0h0.9V1261ZM1954.22 1261V1170.0h0.9V1261ZM1956.35 1261V1222.0h0.9V1261ZM1958.48 1261V1196.0h0.9V1261ZM1960.61 1261V1196.0h0.9V1261ZM1962.74 1261V1196.0h0.9V1261ZM1964.87 1261V1170.0h0.9V1261ZM1967.00 1261V1157.0h0.9V1261ZM1969.13 1261V1248.0h0.9V1261ZM1971.26 1261V1209.0h0.9V1261ZM1973.39 1261V1222.0h0.9V1261ZM1975.52 1261V1248.0h0.9V1261ZM1977.65 1261V1209.0h0.9V1261ZM1979.78 1261V1183.0h0.9V1261ZM1981.91 1261V1248.0h0.9V1261ZM1984.04 1261V1222.0h0.9V1261ZM1986.17 1261V1222.0h0.9V1261ZM1988.30 1261V1235.0h0.9V1261ZM1990.43 1261V1209.0h0.9V1261ZM1992.56 1261V1209.0h0.9V1261ZM1994.69 1261V1222.0h0.9V1261ZM1996.82 1261V1222.0h0.9V1261ZM1998.95 1261V1170.0h0.9V1261ZM2001.08 1261V1235.0h0.9V1261ZM2003.21 1261V1196.0h0.9V1261ZM2005.34 1261V1235.0h0.9V1261ZM2007.47 1261V1235.0h0.9V1261ZM2009.60 1261V1183.0h0.9V1261ZM2011.73 1261V1209.0h0.9V1261ZM2013.86 1261V1144.0h0.9V1261ZM2015.99 1261V1196.0h0.9V1261ZM2018.12 1261V1222.0h0.9V1261ZM2020.25 1261V1209.0h0.9V1261ZM2022.38 1261V1222.0h0.9V1261ZM2024.51 1261V1196.0h0.9V1261ZM2026.64 1261V1209.0h0.9V1261ZM2028.77 1261V1209.0h0.9V1261ZM2030.90 1261V1222.0h0.9V1261ZM2033.03 1261V1248.0h0.9V1261ZM2035.16 1261V1248.0h0.9V1261ZM2037.29 1261V1248.0h0.9V1261ZM2039.42 1261V1196.0h0.9V1261ZM2041.55 1261V1222.0h0.9V1261ZM2043.68 1261V1235.0h0.9V1261ZM2045.81 1261V1196.0h0.9V1261ZM2047.94 1261V1222.0h0.9V1261ZM2050.07 1261V1196.0h0.9V1261ZM2052.20 1261V1183.0h0.9V1261ZM2054.33 1261V1222.0h0.9V1261ZM2056.46 1261V1170.0h0.9V1261ZM2058.59 1261V1196.0h0.9V1261ZM2060.72 1261V1235.0h0.9V1261ZM2062.85 1261V1209.0h0.9V1261ZM2064.98 1261V1196.0h0.9V1261ZM2067.11 1261V1222.0h0.9V1261ZM2069.24 1261V1131.0h0.9V1261ZM2071.37 1261V1235.0h0.9V1261ZM2073.50 1261V1222.0h0.9V1261ZM2075.63 1261V1196.0h0.9V1261ZM2077.76 1261V1157.0h0.9V1261ZM2079.89 1261V1196.0h0.9V1261ZM2082.02 1261V1170.0h0.9V1261ZM2084.15 1261V1209.0h0.9V1261ZM2086.28 1261V1183.0h0.9V1261ZM2088.41 1261V1235.0h0.9V1261ZM2090.54 1261V1209.0h0.9V1261ZM2092.67 1261V1209.0h0.9V1261ZM2094.80 1261V1170.0h0.9V1261ZM2096.93 1261V1183.0h0.9V1261ZM2099.06 1261V1196.0h0.9V1261ZM2101.19 1261V1170.0h0.9V1261ZM2103.32 1261V1209.0h0.9V1261ZM2105.45 1261V1209.0h0.9V1261ZM2107.58 1261V1209.0h0.9V1261ZM2109.71 1261V1170.0h0.9V1261ZM2111.84 1261V1196.0h0.9V1261ZM2113.97 1261V1183.0h0.9V1261ZM2116.10 1261V1157.0h0.9V1261ZM2118.23 1261V1209.0h0.9V1261ZM2120.36 1261V1222.0h0.9V1261ZM2122.49 1261V1222.0h0.9V1261ZM2124.62 1261V1209.0h0.9V1261ZM2126.75 1261V1170.0h0.9V1261ZM2128.88 1261V1170.0h0.9V1261ZM2131.01 1261V1196.0h0.9V1261ZM2133.14 1261V1209.0h0.9V1261ZM2135.27 1261V1196.0h0.9V1261ZM2137.40 1261V1196.0h0.9V1261ZM2139.53 1261V1144.0h0.9V1261ZM2141.66 1261V1209.0h0.9V1261ZM2143.79 1261V1157.0h0.9V1261ZM2145.92 1261V1209.0h0.9V1261ZM2148.05 1261V1235.0h0.9V1261ZM2150.18 1261V1170.0h0.9V1261ZM2152.31 1261V1157.0h0.9V1261ZM2154.44 1261V1209.0h0.9V1261ZM2156.57 1261V1222.0h0.9V1261ZM2158.70 1261V1235.0h0.9V1261ZM2160.83 1261V1222.0h0.9V1261ZM2162.96 1261V1157.0h0.9V1261ZM2165.09 1261V1196.0h0.9V1261ZM2167.22 1261V1183.0h0.9V1261ZM2169.35 1261V1209.0h0.9V1261ZM2171.48 1261V1209.0h0.9V1261ZM2173.61 1261V1235.0h0.9V1261ZM2175.74 1261V1170.0h0.9V1261ZM2177.87 1261V1170.0h0.9V1261ZM2180.00 1261V1157.0h0.9V1261ZM2182.13 1261V1170.0h0.9V1261ZM2184.26 1261V1196.0h0.9V1261ZM2186.39 1261V1209.0h0.9V1261ZM2188.52 1261V1131.0h0.9V1261ZM2190.65 1261V1183.0h0.9V1261ZM2192.78 1261V1183.0h0.9V1261ZM2194.91 1261V1196.0h0.9V1261ZM2197.04 1261V1196.0h0.9V1261ZM2199.17 1261V1196.0h0.9V1261ZM2201.30 1261V1170.0h0.9V1261ZM2203.43 1261V1209.0h0.9V1261ZM2205.56 1261V1222.0h0.9V1261ZM2207.69 1261V1196.0h0.9V1261ZM2209.82 1261V1209.0h0.9V1261ZM2211.95 1261V1131.0h0.9V1261ZM2214.08 1261V1222.0h0.9V1261ZM2216.21 1261V1183.0h0.9V1261ZM2218.34 1261V1170.0h0.9V1261ZM2220.47 1261V1196.0h0.9V1261ZM2222.60 1261V1196.0h0.9V1261ZM2224.73 1261V1196.0h0.9V1261ZM2226.86 1261V1209.0h0.9V1261ZM2228.99 1261V1196.0h0.9V1261ZM2231.12 1261V1209.0h0.9V1261ZM2233.25 1261V1222.0h0.9V1261ZM2235.38 1261V1209.0h0.9V1261ZM2237.51 1261V1222.0h0.9V1261ZM2239.64 1261V1196.0h0.9V1261ZM2241.77 1261V1170.0h0.9V1261ZM2243.90 1261V1222.0h0.9V1261ZM2246.03 1261V1196.0h0.9V1261ZM2248.16 1261V1183.0h0.9V1261ZM2250.29 1261V1170.0h0.9V1261ZM2252.42 1261V1222.0h0.9V1261ZM2254.55 1261V1248.0h0.9V1261ZM2256.68 1261V1209.0h0.9V1261ZM2258.81 1261V1209.0h0.9V1261ZM2260.94 1261V1222.0h0.9V1261ZM2263.07 1261V1196.0h0.9V1261ZM2265.20 1261V1248.0h0.9V1261ZM2267.33 1261V1222.0h0.9V1261ZM2269.46 1261V1235.0h0.9V1261ZM2271.59 1261V1183.0h0.9V1261ZM2273.72 1261V1157.0h0.9V1261ZM2275.85 1261V1196.0h0.9V1261ZM2277.98 1261V1196.0h0.9V1261ZM2280.11 1261V1196.0h0.9V1261ZM2282.24 1261V1222.0h0.9V1261ZM2284.37 1261V1183.0h0.9V1261ZM2286.50 1261V1209.0h0.9V1261ZM2288.63 1261V1235.0h0.9V1261ZM2290.76 1261V1170.0h0.9V1261ZM2292.89 1261V1209.0h0.9V1261ZM2295.02 1261V1183.0h0.9V1261ZM2297.15 1261V1222.0h0.9V1261ZM2299.28 1261V1235.0h0.9V1261ZM2301.41 1261V1209.0h0.9V1261ZM2303.54 1261V1209.0h0.9V1261ZM2305.67 1261V1248.0h0.9V1261ZM2307.80 1261V1196.0h0.9V1261ZM2309.93 1261V1235.0h0.9V1261ZM2312.06 1261V1248.0h0.9V1261ZM2314.19 1261V1235.0h0.9V1261ZM2316.32 1261V1235.0h0.9V1261ZM2318.45 1261V1222.0h0.9V1261ZM2322.71 1261V1222.0h0.9V1261ZM2324.84 1261V1209.0h0.9V1261ZM2326.97 1261V1222.0h0.9V1261ZM2329.10 1261V1209.0h0.9V1261ZM2331.23 1261V1235.0h0.9V1261ZM2333.36 1261V1248.0h0.9V1261ZM2335.49 1261V1222.0h0.9V1261Z"/>
<text class="ax" x="1553" y="1301" text-anchor="middle" style="fill:#5b5b5b;font-size:19.5px">Jan 4</text>
<text class="ax" x="1671" y="1301" text-anchor="middle" style="fill:#5b5b5b;font-size:19.5px">Feb 28</text>
<text class="ax" x="1795" y="1301" text-anchor="middle" style="fill:#5b5b5b;font-size:19.5px">Apr 26</text>
<text class="ax" x="1918" y="1301" text-anchor="middle" style="fill:#5b5b5b;font-size:19.5px">Jun 23</text>
<text class="ax" x="2042" y="1301" text-anchor="middle" style="fill:#5b5b5b;font-size:19.5px">Aug 20</text>
<text class="ax" x="2166" y="1301" text-anchor="middle" style="fill:#5b5b5b;font-size:19.5px">Oct 17</text>
<text class="ax" x="2287" y="1301" text-anchor="middle" style="fill:#5b5b5b;font-size:19.5px">Dec 13</text>
</svg>
<div class="card" style="left:543px;top:1354px;width:434px;height:176px;border-radius:17px"><div class="mt" style="top:31.8px">Abonnés vérifiés</div><div class="mv" style="top:89.5px">150</div></div>
<svg class="abs" style="left:927px;top:1478px;width:26px;height:26px" viewBox="-13 -13 26 26"><circle r="10.3" fill="none" stroke="#4d555d" stroke-width="1.8"/><circle cy="-4.3" r="1.35" fill="#4d555d"/><path d="M0 -0.8 V5.4" stroke="#4d555d" stroke-width="2.1"/></svg>
<div class="card" style="left:1009px;top:1354px;width:434px;height:176px;border-radius:17px"><div class="mt" style="top:31.8px">Impressions</div><div class="mv" style="top:89.5px">1.8M</div></div>
<svg class="abs" style="left:1393px;top:1478px;width:26px;height:26px" viewBox="-13 -13 26 26"><circle r="10.3" fill="none" stroke="#4d555d" stroke-width="1.8"/><circle cy="-4.3" r="1.35" fill="#4d555d"/><path d="M0 -0.8 V5.4" stroke="#4d555d" stroke-width="2.1"/></svg>
<div class="card" style="left:1473px;top:1354px;width:434px;height:176px;border-radius:17px"><div class="mt" style="top:31.8px">Taux d’engagement</div><div class="mv" style="top:89.5px">5.8%</div></div>
<svg class="abs" style="left:1857px;top:1478px;width:26px;height:26px" viewBox="-13 -13 26 26"><circle r="10.3" fill="none" stroke="#4d555d" stroke-width="1.8"/><circle cy="-4.3" r="1.35" fill="#4d555d"/><path d="M0 -0.8 V5.4" stroke="#4d555d" stroke-width="2.1"/></svg>
<div class="card" style="left:1938px;top:1354px;width:434px;height:176px;border-radius:17px"><div class="mt" style="top:31.8px">Engagements</div><div class="mv" style="top:89.5px">109.1K</div></div>
<svg class="abs" style="left:2322px;top:1478px;width:26px;height:26px" viewBox="-13 -13 26 26"><circle r="10.3" fill="none" stroke="#4d555d" stroke-width="1.8"/><circle cy="-4.3" r="1.35" fill="#4d555d"/><path d="M0 -0.8 V5.4" stroke="#4d555d" stroke-width="2.1"/></svg>
<div class="card" style="left:543px;top:1561px;width:434px;height:176px;border-radius:17px"><div class="mt" style="top:31.8px">Visites du profil</div><div class="mv" style="top:89.5px">5K</div></div>
<svg class="abs" style="left:927px;top:1685px;width:26px;height:26px" viewBox="-13 -13 26 26"><circle r="10.3" fill="none" stroke="#4d555d" stroke-width="1.8"/><circle cy="-4.3" r="1.35" fill="#4d555d"/><path d="M0 -0.8 V5.4" stroke="#4d555d" stroke-width="2.1"/></svg>
<div class="card" style="left:1009px;top:1561px;width:434px;height:176px;border-radius:17px"><div class="mt" style="top:31.8px">Réponses</div><div class="mv" style="top:89.5px">3.4K</div></div>
<svg class="abs" style="left:1393px;top:1685px;width:26px;height:26px" viewBox="-13 -13 26 26"><circle r="10.3" fill="none" stroke="#4d555d" stroke-width="1.8"/><circle cy="-4.3" r="1.35" fill="#4d555d"/><path d="M0 -0.8 V5.4" stroke="#4d555d" stroke-width="2.1"/></svg>
<div class="card" style="left:1473px;top:1561px;width:434px;height:176px;border-radius:17px"><div class="mt" style="top:31.8px">J'aime</div><div class="mv" style="top:89.5px">51.7K</div></div>
<svg class="abs" style="left:1857px;top:1685px;width:26px;height:26px" viewBox="-13 -13 26 26"><circle r="10.3" fill="none" stroke="#4d555d" stroke-width="1.8"/><circle cy="-4.3" r="1.35" fill="#4d555d"/><path d="M0 -0.8 V5.4" stroke="#4d555d" stroke-width="2.1"/></svg>
<div class="card" style="left:1938px;top:1561px;width:434px;height:176px;border-radius:17px"><div class="mt" style="top:31.8px">Reposts</div><div class="mv" style="top:89.5px">8.4K</div></div>
<svg class="abs" style="left:2322px;top:1685px;width:26px;height:26px" viewBox="-13 -13 26 26"><circle r="10.3" fill="none" stroke="#4d555d" stroke-width="1.8"/><circle cy="-4.3" r="1.35" fill="#4d555d"/><path d="M0 -0.8 V5.4" stroke="#4d555d" stroke-width="2.1"/></svg>
<div class="card" style="left:543px;top:1766px;width:434px;height:176px;border-radius:17px"><div class="mt" style="top:31.8px">Signets</div><div class="mv" style="top:89.5px">1K</div></div>
<svg class="abs" style="left:927px;top:1890px;width:26px;height:26px" viewBox="-13 -13 26 26"><circle r="10.3" fill="none" stroke="#4d555d" stroke-width="1.8"/><circle cy="-4.3" r="1.35" fill="#4d555d"/><path d="M0 -0.8 V5.4" stroke="#4d555d" stroke-width="2.1"/></svg>
<div class="card" style="left:1009px;top:1766px;width:434px;height:176px;border-radius:17px"><div class="mt" style="top:31.8px">Partages</div><div class="mv" style="top:89.5px">382</div></div>
<svg class="abs" style="left:1393px;top:1890px;width:26px;height:26px" viewBox="-13 -13 26 26"><circle r="10.3" fill="none" stroke="#4d555d" stroke-width="1.8"/><circle cy="-4.3" r="1.35" fill="#4d555d"/><path d="M0 -0.8 V5.4" stroke="#4d555d" stroke-width="2.1"/></svg>
<div class="card" style="left:543px;top:2072px;width:434px;height:176px;border-radius:17px"><div class="mt" style="top:31.8px">Vues de la vidéo</div><div class="mv" style="top:89.5px">75.5K</div></div>
<svg class="abs" style="left:927px;top:2196px;width:26px;height:26px" viewBox="-13 -13 26 26"><circle r="10.3" fill="none" stroke="#4d555d" stroke-width="1.8"/><circle cy="-4.3" r="1.35" fill="#4d555d"/><path d="M0 -0.8 V5.4" stroke="#4d555d" stroke-width="2.1"/></svg>
<div class="card" style="left:1009px;top:2072px;width:434px;height:176px;border-radius:17px"><div class="mt" style="top:31.8px">Vues des médias</div><div class="mv" style="top:89.5px">84.6K</div></div>
<svg class="abs" style="left:1393px;top:2196px;width:26px;height:26px" viewBox="-13 -13 26 26"><circle r="10.3" fill="none" stroke="#4d555d" stroke-width="1.8"/><circle cy="-4.3" r="1.35" fill="#4d555d"/><path d="M0 -0.8 V5.4" stroke="#4d555d" stroke-width="2.1"/></svg>
<svg class="abs" style="left:798.0px;top:1386.0px;width:26px;height:26px" viewBox="0 0 22 22"><path fill="#4a90e2" d="M20.396 11c-.018-.646-.215-1.275-.57-1.816-.354-.54-.852-.972-1.438-1.246.223-.607.27-1.264.14-1.897-.131-.634-.437-1.218-.882-1.687-.47-.445-1.053-.75-1.687-.882-.633-.13-1.29-.083-1.897.14-.273-.587-.704-1.086-1.245-1.44S11.647 1.62 11 1.604c-.646.017-1.273.213-1.813.568s-.969.854-1.24 1.44c-.608-.223-1.267-.272-1.902-.14-.635.13-1.22.436-1.69.882-.445.47-.749 1.055-.878 1.688-.13.633-.08 1.29.144 1.896-.587.274-1.087.705-1.443 1.245-.356.54-.555 1.17-.574 1.817.02.647.218 1.276.574 1.817.356.54.856.972 1.443 1.245-.224.606-.274 1.263-.144 1.896.13.634.433 1.218.877 1.688.47.443 1.054.747 1.687.878.633.132 1.29.084 1.897-.136.274.586.705 1.084 1.246 1.439.54.354 1.17.551 1.816.569.647-.016 1.276-.213 1.817-.567s.972-.854 1.245-1.44c.604.239 1.266.296 1.903.164.636-.132 1.22-.447 1.68-.907.46-.46.776-1.044.908-1.681s.075-1.299-.165-1.903c.586-.274 1.084-.705 1.439-1.246.354-.54.551-1.17.569-1.816z"/><path fill="#fff" d="M9.662 14.85l-3.429-3.428 1.293-1.302 2.072 2.072 4.4-4.794 1.347 1.246z"/></svg>
<div class="t" style="left:686px;top:1470.6px;font-size:26px;color:#0f1419">/ 9.7K</div>
<svg class="abs" style="left:346.65px;top:2163.4500000000003px;width:32.7px;height:32.7px" viewBox="0 0 22 22"><path fill="#4a90e2" d="M20.396 11c-.018-.646-.215-1.275-.57-1.816-.354-.54-.852-.972-1.438-1.246.223-.607.27-1.264.14-1.897-.131-.634-.437-1.218-.882-1.687-.47-.445-1.053-.75-1.687-.882-.633-.13-1.29-.083-1.897.14-.273-.587-.704-1.086-1.245-1.44S11.647 1.62 11 1.604c-.646.017-1.273.213-1.813.568s-.969.854-1.24 1.44c-.608-.223-1.267-.272-1.902-.14-.635.13-1.22.436-1.69.882-.445.47-.749 1.055-.878 1.688-.13.633-.08 1.29.144 1.896-.587.274-1.087.705-1.443 1.245-.356.54-.555 1.17-.574 1.817.02.647.218 1.276.574 1.817.356.54.856.972 1.443 1.245-.224.606-.274 1.263-.144 1.896.13.634.433 1.218.877 1.688.47.443 1.054.747 1.687.878.633.132 1.29.084 1.897-.136.274.586.705 1.084 1.246 1.439.54.354 1.17.551 1.816.569.647-.016 1.276-.213 1.817-.567s.972-.854 1.245-1.44c.604.239 1.266.296 1.903.164.636-.132 1.22-.447 1.68-.907.46-.46.776-1.044.908-1.681s.075-1.299-.165-1.903c.586-.274 1.084-.705 1.439-1.246.354-.54.551-1.17.569-1.816z"/><path fill="#fff" d="M9.662 14.85l-3.429-3.428 1.293-1.302 2.072 2.072 4.4-4.794 1.347 1.246z"/></svg>
<div class="t" style="left:543px;top:2002.5px;font-size:37px;font-weight:700;letter-spacing:-0.4px;-webkit-text-stroke:0.7px #0f1419">Activité des médias</div>
</body></html>
